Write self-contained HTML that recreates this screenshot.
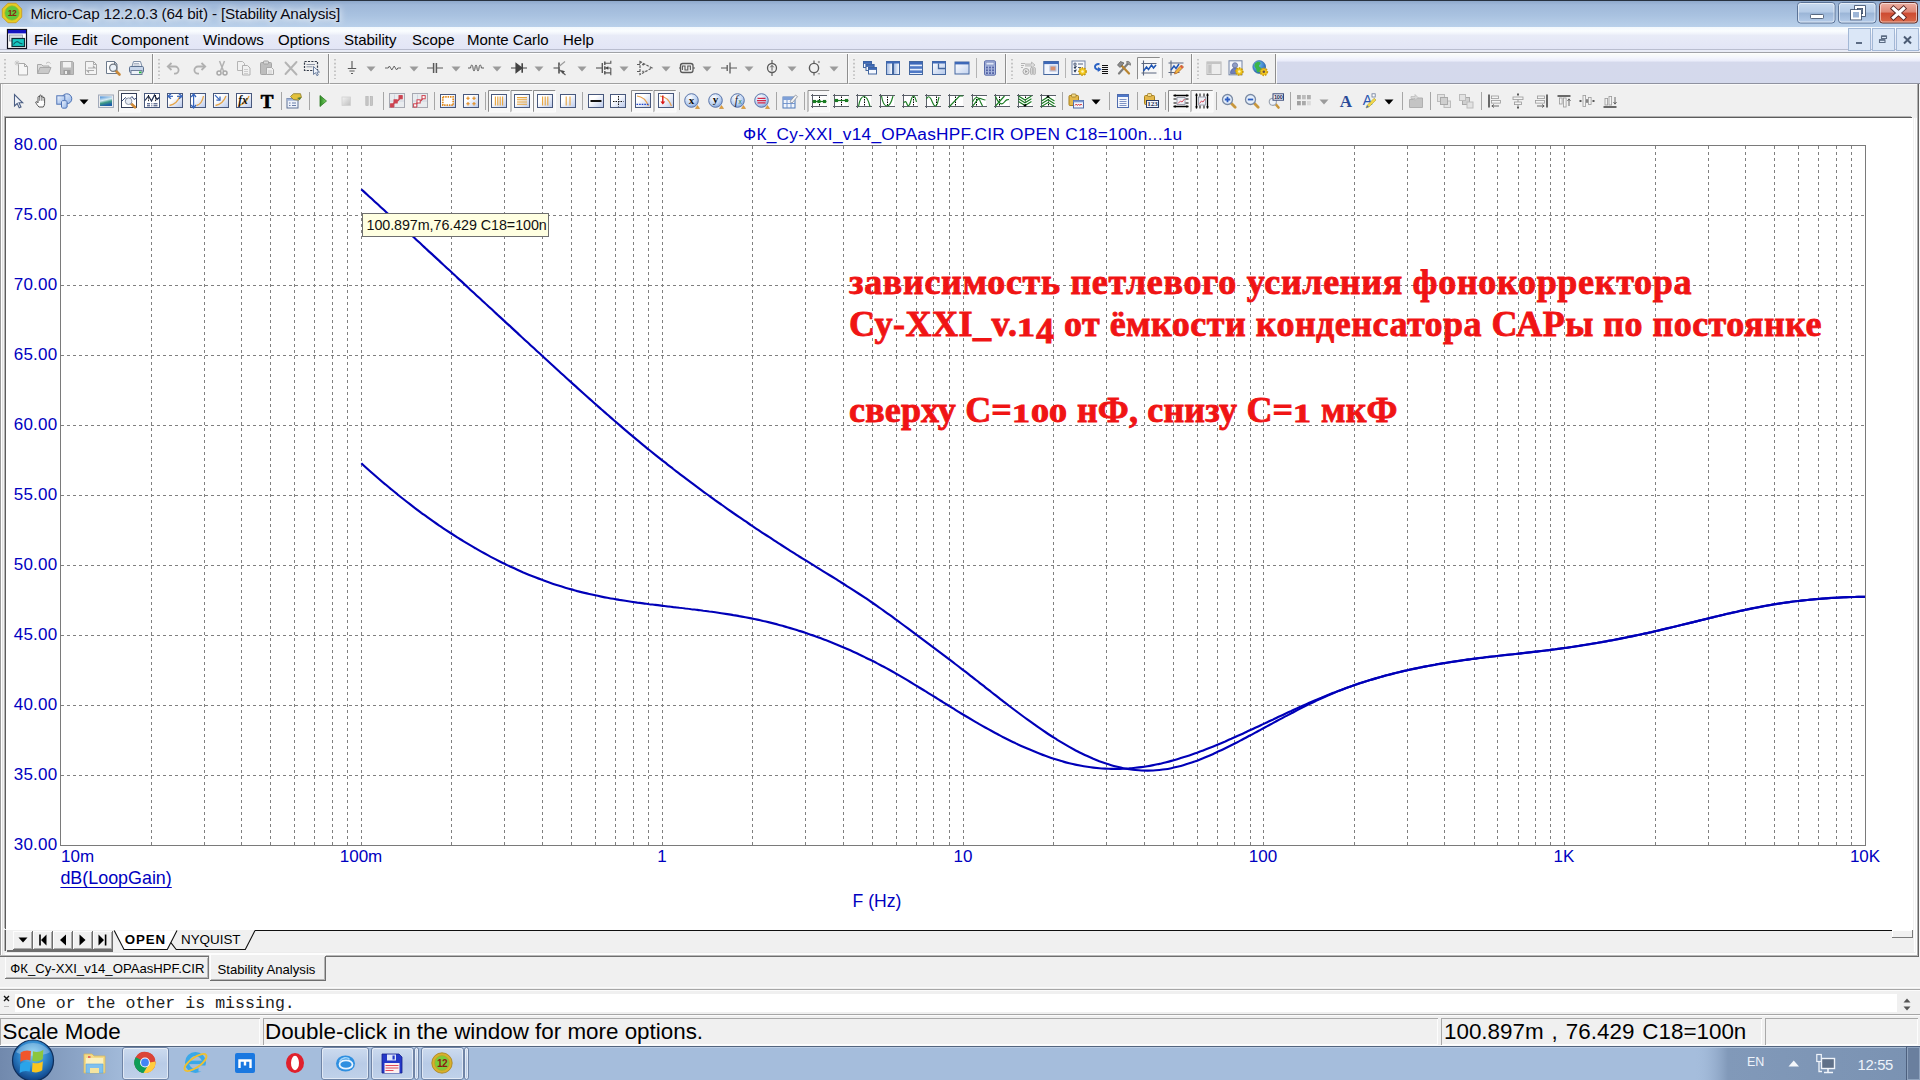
<!DOCTYPE html><html><head><meta charset="utf-8"><title>Micro-Cap</title><style>
*{box-sizing:border-box;margin:0;padding:0}
html,body{width:1920px;height:1080px;overflow:hidden;background:#f0f0f0;font-family:"Liberation Sans",sans-serif;}
div{position:absolute;white-space:nowrap}
#titlebar{left:0;top:0;width:1920px;height:27px;background:linear-gradient(#8ea8cb 0,#9fb8d9 15%,#a9c2e0 55%,#b9d0ea 100%);border-top:1px solid #27313f}
#title{left:30.5px;top:4px;font-size:15.3px;line-height:19px;color:#0a0a14;letter-spacing:-0.17px;text-shadow:0 0 6px #fff,0 0 9px #fff}
#menubar{left:0;top:27px;width:1920px;height:26px;background:linear-gradient(#f3f8fd 0,#fafdff 16%,#f1f4fb 26%,#e8ebf7 34%,#e2e5f6 88%,#e2e4f6 88.5%,#b9bdcf 88.6%,#b9bdcf 92.3%,#e9ecf6 92.4%,#e9ecf6 100%);border-bottom:1px solid #a0a2a6}
.mi{top:30px;font-size:15px;line-height:19px;color:#000}
#tb1{left:0;top:53px;width:1920px;height:31px;background:linear-gradient(#ffffff 0,#f9fbf9 5%,#f3f5fc 16%,#eaecfa 27%,#d5d9ec 30%,#d4d9ec 100%);border-bottom:1px solid #8f92a0}
#tb1a{left:0;top:53px;width:1277px;height:31px;background:#f0f0f0;border-top:1px solid #ffffff;border-bottom:1px solid #a0a0a0}
#tb2{left:0;top:84px;width:1920px;height:34px;background:#f0f0f0;border-top:1px solid #fafafa}
#plotwin{left:6px;top:118px;width:1907px;height:812px;background:#fff;box-shadow:-1px -1px 0 #5c5c5c,-2px -2px 0 #b4b4b4}
#lframe{left:0;top:84px;width:4px;height:872px;background:linear-gradient(90deg,#9a9a9a 0,#9a9a9a 25%,#fff 25%,#fff 50%,#e2e2e2 50%,#e2e2e2 75%,#f2f2f2 75%)}
#lframe2{left:4px;top:930px;width:2px;height:21px;background:linear-gradient(90deg,#b4b4b4 0,#b4b4b4 50%,#5c5c5c 50%)}
#rframe{left:1913px;top:118px;width:4px;height:836px;background:linear-gradient(90deg,#f0f0f0 0,#f0f0f0 25%,#fff 25%,#fff 50%,#f4f4f4 50%,#f4f4f4 75%,#fff 75%)}
#rframe2{left:1917px;top:84px;width:3px;height:873px;background:linear-gradient(90deg,#b0b0b0 0,#b0b0b0 33.3%,#646464 33.3%,#646464 66.6%,#f4f4f4 66.6%)}
.yl{left:0;width:57.5px;text-align:right;font-size:17px;line-height:20px;color:#0000c0;letter-spacing:0.25px}
.xl{top:847px;font-size:17px;line-height:20px;color:#0000c0}
#ctitle{left:743px;top:124px;font-size:17.3px;line-height:20px;color:#0000c8;letter-spacing:0.26px}
#ylab{left:60.4px;top:868px;font-size:17.9px;line-height:20px;color:#0000c0;text-decoration:underline;text-underline-offset:2.5px;text-decoration-skip-ink:none;text-decoration-thickness:1px}
#xlab{left:827px;top:891px;width:100px;text-align:center;font-size:17.6px;line-height:20px;color:#0000c0}
#tip{left:362px;top:213px;width:187px;height:24px;background:#ffffe1;border:1px solid #6f6f6f;font-size:14.3px;line-height:22px;color:#111;padding-left:3.5px;letter-spacing:-0.06px}
.os{position:static;display:inline-block;font-size:26px;line-height:26px;transform:scaleX(1.38);transform-origin:0 100%;width:18.6px;letter-spacing:0;vertical-align:baseline}
.os4{position:relative;top:6.5px}
.red span{white-space:nowrap}
.red{left:849px;font-family:"Liberation Serif",serif;font-weight:bold;font-size:36px;line-height:43px;color:#f01414;-webkit-text-stroke:0.85px #f01414}
#msgtxt{left:16px;top:994px;font-family:"Liberation Mono",monospace;font-size:16.6px;line-height:19px;color:#222}
.st{top:1018.4px;height:27px;font-size:22.4px;line-height:28px;color:#000;overflow:hidden}
.tab{top:931px;font-size:13.4px;line-height:18px;color:#000}
.dtab{font-size:13.15px;line-height:18px;color:#000}
</style></head><body>
<div id="titlebar"></div>
<div id="menubar"></div>
<div id="tb1"></div><div id="tb1a"></div><div id="tb2"></div>
<div id="lframe"></div><div id="rframe"></div><div id="lframe2"></div><div id="rframe2"></div><div id="plotwin"></div>
<svg id="chart" width="1920" height="1080" viewBox="0 0 1920 1080" style="position:absolute;left:0;top:0" shape-rendering="crispEdges">
<path d="M151.5 146 V845M204.5 146 V845M241.5 146 V845M270.5 146 V845M294.5 146 V845M314.5 146 V845M332.5 146 V845M347.5 146 V845M361.5 146 V845M451.5 146 V845M504.5 146 V845M542.5 146 V845M571.5 146 V845M595.5 146 V845M615.5 146 V845M633.5 146 V845M648.5 146 V845M662.5 146 V845M752.5 146 V845M805.5 146 V845M843.5 146 V845M872.5 146 V845M896.5 146 V845M916.5 146 V845M933.5 146 V845M949.5 146 V845M963.5 146 V845M1053.5 146 V845M1106.5 146 V845M1144.5 146 V845M1173.5 146 V845M1197.5 146 V845M1217.5 146 V845M1234.5 146 V845M1250.5 146 V845M1263.5 146 V845M1354.5 146 V845M1407.5 146 V845M1444.5 146 V845M1474.5 146 V845M1497.5 146 V845M1518.5 146 V845M1535.5 146 V845M1550.5 146 V845M1564.5 146 V845M1655.5 146 V845M1708.5 146 V845M1745.5 146 V845M1774.5 146 V845M1798.5 146 V845M1818.5 146 V845M1836.5 146 V845M1851.5 146 V845" stroke="#808080" stroke-width="1" stroke-dasharray="3 3" fill="none"/>
<path d="M61 215.5 H1865M61 285.5 H1865M61 355.5 H1865M61 425.5 H1865M61 495.5 H1865M61 565.5 H1865M61 635.5 H1865M61 705.5 H1865M61 775.5 H1865" stroke="#808080" stroke-width="1" stroke-dasharray="3 3" fill="none"/>
<rect x="60.5" y="145.5" width="1805" height="700" fill="none" stroke="#7a7a7a" stroke-width="1"/>
<g shape-rendering="geometricPrecision" fill="none" stroke="#0000b8" stroke-width="2.15" stroke-linejoin="round">
<path d="M361.3 189.2 C362.3 190.1 365.3 192.9 367.3 194.7 C369.3 196.5 371.3 198.4 373.3 200.2 C375.3 202.0 377.3 203.9 379.3 205.7 C381.3 207.5 383.3 209.4 385.3 211.2 C387.3 213.0 389.3 214.9 391.3 216.7 C393.3 218.6 395.3 220.4 397.3 222.2 C399.3 224.1 401.3 225.9 403.3 227.8 C405.3 229.6 407.3 231.4 409.3 233.3 C411.3 235.1 413.3 237.0 415.3 238.8 C417.3 240.6 419.3 242.5 421.3 244.3 C423.3 246.2 425.3 248.0 427.3 249.9 C429.3 251.7 431.3 253.6 433.3 255.4 C435.3 257.3 437.3 259.1 439.3 260.9 C441.3 262.8 443.3 264.6 445.3 266.5 C447.3 268.3 449.3 270.2 451.3 272.0 C453.3 273.9 455.3 275.7 457.3 277.6 C459.3 279.4 461.3 281.3 463.3 283.1 C465.3 285.0 467.3 286.8 469.3 288.7 C471.3 290.5 473.3 292.4 475.3 294.2 C477.3 296.0 479.3 297.9 481.3 299.7 C483.3 301.6 485.3 303.4 487.3 305.3 C489.3 307.1 491.3 309.0 493.3 310.8 C495.3 312.7 497.3 314.5 499.3 316.4 C501.3 318.2 503.3 320.0 505.3 321.9 C507.3 323.7 509.3 325.6 511.3 327.4 C513.3 329.3 515.3 331.1 517.3 332.9 C519.3 334.8 521.3 336.6 523.3 338.5 C525.3 340.3 527.3 342.2 529.3 344.0 C531.3 345.8 533.3 347.7 535.3 349.5 C537.3 351.3 539.3 353.2 541.3 355.0 C543.3 356.9 545.3 358.7 547.3 360.5 C549.3 362.4 551.3 364.2 553.3 366.0 C555.3 367.9 557.3 369.7 559.3 371.5 C561.3 373.3 563.3 375.2 565.3 377.0 C567.3 378.8 569.3 380.6 571.3 382.4 C573.3 384.2 575.3 386.1 577.3 387.9 C579.3 389.7 581.3 391.5 583.3 393.3 C585.3 395.1 587.3 396.9 589.3 398.6 C591.3 400.4 593.3 402.2 595.3 404.0 C597.3 405.8 599.3 407.5 601.3 409.3 C603.3 411.0 605.3 412.8 607.3 414.5 C609.3 416.3 611.3 418.0 613.3 419.8 C615.3 421.5 617.3 423.2 619.3 424.9 C621.3 426.7 623.3 428.4 625.3 430.1 C627.3 431.8 629.3 433.4 631.3 435.1 C633.3 436.8 635.3 438.5 637.3 440.1 C639.3 441.8 641.3 443.4 643.3 445.1 C645.3 446.7 647.3 448.4 649.3 450.0 C651.3 451.6 653.3 453.2 655.3 454.8 C657.3 456.4 659.3 458.0 661.3 459.6 C663.3 461.2 665.3 462.7 667.3 464.3 C669.3 465.9 671.3 467.4 673.3 469.0 C675.3 470.5 677.3 472.1 679.3 473.6 C681.3 475.1 683.3 476.7 685.3 478.2 C687.3 479.7 689.3 481.2 691.3 482.7 C693.3 484.2 695.3 485.7 697.3 487.1 C699.3 488.6 701.3 490.1 703.3 491.6 C705.3 493.0 707.3 494.5 709.3 495.9 C711.3 497.4 713.3 498.8 715.3 500.3 C717.3 501.7 719.3 503.1 721.3 504.5 C723.3 506.0 725.3 507.4 727.3 508.8 C729.3 510.2 731.3 511.6 733.3 513.0 C735.3 514.3 737.3 515.7 739.3 517.1 C741.3 518.5 743.3 519.8 745.3 521.2 C747.3 522.6 749.3 523.9 751.3 525.3 C753.3 526.6 755.3 528.0 757.3 529.3 C759.3 530.6 761.3 532.0 763.3 533.3 C765.3 534.6 767.3 535.9 769.3 537.2 C771.3 538.5 773.3 539.9 775.3 541.2 C777.3 542.5 779.3 543.7 781.3 545.0 C783.3 546.3 785.3 547.6 787.3 548.9 C789.3 550.2 791.3 551.4 793.3 552.7 C795.3 554.0 797.3 555.2 799.3 556.5 C801.3 557.7 803.3 559.0 805.3 560.2 C807.3 561.5 809.3 562.7 811.3 563.9 C813.3 565.2 815.3 566.4 817.3 567.6 C819.3 568.9 821.3 570.1 823.3 571.3 C825.3 572.6 827.3 573.8 829.3 575.0 C831.3 576.3 833.3 577.5 835.3 578.7 C837.3 580.0 839.3 581.2 841.3 582.5 C843.3 583.7 845.3 585.0 847.3 586.3 C849.3 587.5 851.3 588.8 853.3 590.1 C855.3 591.4 857.3 592.7 859.3 594.0 C861.3 595.3 863.3 596.6 865.3 597.9 C867.3 599.3 869.3 600.6 871.3 602.0 C873.3 603.4 875.3 604.8 877.3 606.1 C879.3 607.5 881.3 609.0 883.3 610.4 C885.3 611.8 887.3 613.3 889.3 614.7 C891.3 616.1 893.3 617.6 895.3 619.1 C897.3 620.5 899.3 622.0 901.3 623.5 C903.3 625.0 905.3 626.5 907.3 627.9 C909.3 629.4 911.3 630.9 913.3 632.4 C915.3 633.9 917.3 635.4 919.3 636.9 C921.3 638.4 923.3 639.9 925.3 641.4 C927.3 642.9 929.3 644.4 931.3 645.9 C933.3 647.4 935.3 648.9 937.3 650.4 C939.3 651.9 941.3 653.4 943.3 654.9 C945.3 656.4 947.3 657.9 949.3 659.4 C951.3 660.9 953.3 662.4 955.3 664.0 C957.3 665.5 959.3 667.0 961.3 668.6 C963.3 670.1 965.3 671.7 967.3 673.2 C969.3 674.8 971.3 676.3 973.3 677.9 C975.3 679.5 977.3 681.0 979.3 682.6 C981.3 684.2 983.3 685.7 985.3 687.3 C987.3 688.9 989.3 690.4 991.3 692.0 C993.3 693.6 995.3 695.1 997.3 696.7 C999.3 698.3 1001.3 699.8 1003.3 701.4 C1005.3 702.9 1007.3 704.4 1009.3 706.0 C1011.3 707.5 1013.3 709.0 1015.3 710.5 C1017.3 712.0 1019.3 713.5 1021.3 715.0 C1023.3 716.5 1025.3 718.0 1027.3 719.4 C1029.3 720.9 1031.3 722.3 1033.3 723.7 C1035.3 725.2 1037.3 726.6 1039.3 727.9 C1041.3 729.3 1043.3 730.7 1045.3 732.0 C1047.3 733.4 1049.3 734.7 1051.3 736.0 C1053.3 737.3 1055.3 738.5 1057.3 739.8 C1059.3 741.0 1061.3 742.2 1063.3 743.4 C1065.3 744.6 1067.3 745.8 1069.3 746.9 C1071.3 748.0 1073.3 749.1 1075.3 750.2 C1077.3 751.2 1079.3 752.3 1081.3 753.2 C1083.3 754.2 1085.3 755.2 1087.3 756.1 C1089.3 757.0 1091.3 757.9 1093.3 758.8 C1095.3 759.6 1097.3 760.4 1099.3 761.2 C1101.3 761.9 1103.3 762.6 1105.3 763.3 C1107.3 764.0 1109.3 764.6 1111.3 765.2 C1113.3 765.8 1115.3 766.3 1117.3 766.8 C1119.3 767.3 1121.3 767.8 1123.3 768.2 C1125.3 768.6 1127.3 768.9 1129.3 769.2 C1131.3 769.5 1133.3 769.8 1135.3 770.0 C1137.3 770.2 1139.3 770.4 1141.3 770.5 C1143.3 770.6 1145.3 770.6 1147.3 770.6 C1149.3 770.6 1151.3 770.6 1153.3 770.5 C1155.3 770.4 1157.3 770.2 1159.3 770.0 C1161.3 769.8 1163.3 769.6 1165.3 769.3 C1167.3 769.0 1169.3 768.6 1171.3 768.2 C1173.3 767.8 1175.3 767.3 1177.3 766.8 C1179.3 766.3 1181.3 765.8 1183.3 765.2 C1185.3 764.6 1187.3 764.0 1189.3 763.3 C1191.3 762.7 1193.3 762.0 1195.3 761.3 C1197.3 760.5 1199.3 759.8 1201.3 759.0 C1203.3 758.2 1205.3 757.4 1207.3 756.5 C1209.3 755.7 1211.3 754.8 1213.3 753.9 C1215.3 753.0 1217.3 752.0 1219.3 751.1 C1221.3 750.2 1223.3 749.2 1225.3 748.2 C1227.3 747.2 1229.3 746.2 1231.3 745.2 C1233.3 744.2 1235.3 743.2 1237.3 742.2 C1239.3 741.1 1241.3 740.1 1243.3 739.0 C1245.3 738.0 1247.3 736.9 1249.3 735.8 C1251.3 734.8 1253.3 733.7 1255.3 732.6 C1257.3 731.5 1259.3 730.5 1261.3 729.4 C1263.3 728.3 1265.3 727.2 1267.3 726.1 C1269.3 725.0 1271.3 724.0 1273.3 722.9 C1275.3 721.8 1277.3 720.7 1279.3 719.6 C1281.3 718.6 1283.3 717.5 1285.3 716.4 C1287.3 715.4 1289.3 714.3 1291.3 713.3 C1293.3 712.2 1295.3 711.2 1297.3 710.1 C1299.3 709.1 1301.3 708.1 1303.3 707.1 C1305.3 706.1 1307.3 705.1 1309.3 704.1 C1311.3 703.1 1313.3 702.1 1315.3 701.2 C1317.3 700.3 1319.3 699.3 1321.3 698.4 C1323.3 697.5 1325.3 696.6 1327.3 695.7 C1329.3 694.9 1331.3 694.0 1333.3 693.2 C1335.3 692.4 1337.3 691.5 1339.3 690.8 C1341.3 690.0 1343.3 689.2 1345.3 688.4 C1347.3 687.7 1349.3 686.9 1351.3 686.2 C1353.3 685.5 1355.3 684.8 1357.3 684.1 C1359.3 683.4 1361.3 682.8 1363.3 682.1 C1365.3 681.5 1367.3 680.8 1369.3 680.2 C1371.3 679.6 1373.3 679.0 1375.3 678.4 C1377.3 677.8 1379.3 677.2 1381.3 676.7 C1383.3 676.1 1385.3 675.6 1387.3 675.0 C1389.3 674.5 1391.3 674.0 1393.3 673.5 C1395.3 673.0 1397.3 672.5 1399.3 672.0 C1401.3 671.6 1403.3 671.1 1405.3 670.6 C1407.3 670.2 1409.3 669.7 1411.3 669.3 C1413.3 668.9 1415.3 668.5 1417.3 668.1 C1419.3 667.7 1421.3 667.3 1423.3 666.9 C1425.3 666.5 1427.3 666.1 1429.3 665.7 C1431.3 665.4 1433.3 665.0 1435.3 664.7 C1437.3 664.3 1439.3 664.0 1441.3 663.6 C1443.3 663.3 1445.3 663.0 1447.3 662.7 C1449.3 662.4 1451.3 662.1 1453.3 661.8 C1455.3 661.5 1457.3 661.2 1459.3 660.9 C1461.3 660.6 1463.3 660.3 1465.3 660.0 C1467.3 659.7 1469.3 659.5 1471.3 659.2 C1473.3 658.9 1475.3 658.7 1477.3 658.4 C1479.3 658.2 1481.3 657.9 1483.3 657.7 C1485.3 657.4 1487.3 657.2 1489.3 656.9 C1491.3 656.7 1493.3 656.5 1495.3 656.2 C1497.3 656.0 1499.3 655.8 1501.3 655.5 C1503.3 655.3 1505.3 655.1 1507.3 654.8 C1509.3 654.6 1511.3 654.4 1513.3 654.2 C1515.3 653.9 1517.3 653.7 1519.3 653.5 C1521.3 653.3 1523.3 653.0 1525.3 652.8 C1527.3 652.6 1529.3 652.4 1531.3 652.1 C1533.3 651.9 1535.3 651.7 1537.3 651.4 C1539.3 651.2 1541.3 651.0 1543.3 650.7 C1545.3 650.5 1547.3 650.3 1549.3 650.0 C1551.3 649.8 1553.3 649.5 1555.3 649.3 C1557.3 649.0 1559.3 648.8 1561.3 648.5 C1563.3 648.2 1565.3 647.9 1567.3 647.7 C1569.3 647.4 1571.3 647.1 1573.3 646.8 C1575.3 646.5 1577.3 646.2 1579.3 645.9 C1581.3 645.6 1583.3 645.3 1585.3 645.0 C1587.3 644.7 1589.3 644.3 1591.3 644.0 C1593.3 643.7 1595.3 643.3 1597.3 643.0 C1599.3 642.6 1601.3 642.3 1603.3 641.9 C1605.3 641.6 1607.3 641.2 1609.3 640.8 C1611.3 640.5 1613.3 640.1 1615.3 639.7 C1617.3 639.3 1619.3 638.9 1621.3 638.5 C1623.3 638.2 1625.3 637.8 1627.3 637.3 C1629.3 636.9 1631.3 636.5 1633.3 636.1 C1635.3 635.7 1637.3 635.3 1639.3 634.8 C1641.3 634.4 1643.3 634.0 1645.3 633.5 C1647.3 633.1 1649.3 632.6 1651.3 632.2 C1653.3 631.7 1655.3 631.3 1657.3 630.8 C1659.3 630.3 1661.3 629.9 1663.3 629.4 C1665.3 628.9 1667.3 628.4 1669.3 628.0 C1671.3 627.5 1673.3 627.0 1675.3 626.5 C1677.3 626.0 1679.3 625.5 1681.3 625.0 C1683.3 624.5 1685.3 624.0 1687.3 623.5 C1689.3 623.1 1691.3 622.6 1693.3 622.1 C1695.3 621.6 1697.3 621.1 1699.3 620.6 C1701.3 620.1 1703.3 619.6 1705.3 619.1 C1707.3 618.6 1709.3 618.1 1711.3 617.6 C1713.3 617.1 1715.3 616.7 1717.3 616.2 C1719.3 615.7 1721.3 615.2 1723.3 614.7 C1725.3 614.3 1727.3 613.8 1729.3 613.3 C1731.3 612.9 1733.3 612.4 1735.3 612.0 C1737.3 611.5 1739.3 611.1 1741.3 610.6 C1743.3 610.2 1745.3 609.8 1747.3 609.4 C1749.3 608.9 1751.3 608.5 1753.3 608.1 C1755.3 607.7 1757.3 607.3 1759.3 607.0 C1761.3 606.6 1763.3 606.2 1765.3 605.8 C1767.3 605.5 1769.3 605.1 1771.3 604.8 C1773.3 604.4 1775.3 604.1 1777.3 603.8 C1779.3 603.5 1781.3 603.2 1783.3 602.9 C1785.3 602.6 1787.3 602.3 1789.3 602.1 C1791.3 601.8 1793.3 601.5 1795.3 601.3 C1797.3 601.0 1799.3 600.8 1801.3 600.6 C1803.3 600.4 1805.3 600.2 1807.3 600.0 C1809.3 599.8 1811.3 599.6 1813.3 599.4 C1815.3 599.2 1817.3 599.0 1819.3 598.9 C1821.3 598.7 1823.3 598.6 1825.3 598.4 C1827.3 598.3 1829.3 598.2 1831.3 598.0 C1833.3 597.9 1835.3 597.8 1837.3 597.7 C1839.3 597.6 1841.3 597.5 1843.3 597.4 C1845.3 597.3 1847.3 597.2 1849.3 597.2 C1851.3 597.1 1853.3 597.0 1855.3 597.0 C1857.3 596.9 1859.7 596.9 1861.3 596.8 C1862.9 596.8 1864.4 596.8 1865.0 596.8"/>
<path d="M361.3 463.3 C362.3 464.2 365.3 466.9 367.3 468.7 C369.3 470.5 371.3 472.3 373.3 474.0 C375.3 475.8 377.3 477.5 379.3 479.2 C381.3 481.0 383.3 482.7 385.3 484.3 C387.3 486.0 389.3 487.7 391.3 489.3 C393.3 491.0 395.3 492.6 397.3 494.2 C399.3 495.9 401.3 497.5 403.3 499.0 C405.3 500.6 407.3 502.2 409.3 503.7 C411.3 505.3 413.3 506.8 415.3 508.3 C417.3 509.8 419.3 511.3 421.3 512.8 C423.3 514.2 425.3 515.7 427.3 517.1 C429.3 518.6 431.3 520.0 433.3 521.4 C435.3 522.8 437.3 524.2 439.3 525.6 C441.3 526.9 443.3 528.3 445.3 529.6 C447.3 530.9 449.3 532.2 451.3 533.5 C453.3 534.8 455.3 536.1 457.3 537.4 C459.3 538.6 461.3 539.9 463.3 541.1 C465.3 542.3 467.3 543.5 469.3 544.7 C471.3 545.9 473.3 547.1 475.3 548.2 C477.3 549.4 479.3 550.5 481.3 551.6 C483.3 552.7 485.3 553.8 487.3 554.9 C489.3 556.0 491.3 557.1 493.3 558.1 C495.3 559.2 497.3 560.2 499.3 561.2 C501.3 562.2 503.3 563.2 505.3 564.1 C507.3 565.1 509.3 566.1 511.3 567.0 C513.3 567.9 515.3 568.8 517.3 569.7 C519.3 570.6 521.3 571.5 523.3 572.4 C525.3 573.2 527.3 574.1 529.3 574.9 C531.3 575.7 533.3 576.5 535.3 577.3 C537.3 578.1 539.3 578.9 541.3 579.6 C543.3 580.4 545.3 581.1 547.3 581.8 C549.3 582.5 551.3 583.2 553.3 583.9 C555.3 584.6 557.3 585.2 559.3 585.8 C561.3 586.5 563.3 587.1 565.3 587.7 C567.3 588.3 569.3 588.9 571.3 589.4 C573.3 590.0 575.3 590.5 577.3 591.1 C579.3 591.6 581.3 592.1 583.3 592.6 C585.3 593.1 587.3 593.6 589.3 594.0 C591.3 594.5 593.3 594.9 595.3 595.3 C597.3 595.8 599.3 596.2 601.3 596.6 C603.3 597.0 605.3 597.4 607.3 597.7 C609.3 598.1 611.3 598.5 613.3 598.8 C615.3 599.2 617.3 599.5 619.3 599.9 C621.3 600.2 623.3 600.5 625.3 600.8 C627.3 601.1 629.3 601.4 631.3 601.7 C633.3 602.0 635.3 602.3 637.3 602.6 C639.3 602.8 641.3 603.1 643.3 603.4 C645.3 603.7 647.3 603.9 649.3 604.2 C651.3 604.4 653.3 604.7 655.3 604.9 C657.3 605.2 659.3 605.4 661.3 605.6 C663.3 605.9 665.3 606.1 667.3 606.4 C669.3 606.6 671.3 606.8 673.3 607.1 C675.3 607.3 677.3 607.5 679.3 607.8 C681.3 608.0 683.3 608.2 685.3 608.5 C687.3 608.7 689.3 608.9 691.3 609.2 C693.3 609.4 695.3 609.7 697.3 609.9 C699.3 610.2 701.3 610.4 703.3 610.7 C705.3 610.9 707.3 611.2 709.3 611.5 C711.3 611.7 713.3 612.0 715.3 612.3 C717.3 612.6 719.3 612.9 721.3 613.2 C723.3 613.5 725.3 613.8 727.3 614.1 C729.3 614.4 731.3 614.7 733.3 615.1 C735.3 615.4 737.3 615.7 739.3 616.1 C741.3 616.4 743.3 616.8 745.3 617.2 C747.3 617.6 749.3 618.0 751.3 618.4 C753.3 618.8 755.3 619.2 757.3 619.6 C759.3 620.1 761.3 620.5 763.3 621.0 C765.3 621.4 767.3 621.9 769.3 622.4 C771.3 622.9 773.3 623.4 775.3 623.9 C777.3 624.4 779.3 625.0 781.3 625.5 C783.3 626.1 785.3 626.6 787.3 627.2 C789.3 627.8 791.3 628.4 793.3 629.0 C795.3 629.6 797.3 630.2 799.3 630.9 C801.3 631.5 803.3 632.1 805.3 632.8 C807.3 633.5 809.3 634.2 811.3 634.9 C813.3 635.5 815.3 636.3 817.3 637.0 C819.3 637.7 821.3 638.5 823.3 639.2 C825.3 640.0 827.3 640.7 829.3 641.5 C831.3 642.3 833.3 643.1 835.3 643.9 C837.3 644.7 839.3 645.6 841.3 646.4 C843.3 647.3 845.3 648.1 847.3 649.0 C849.3 649.9 851.3 650.8 853.3 651.7 C855.3 652.6 857.3 653.5 859.3 654.5 C861.3 655.4 863.3 656.4 865.3 657.4 C867.3 658.3 869.3 659.3 871.3 660.3 C873.3 661.3 875.3 662.3 877.3 663.4 C879.3 664.4 881.3 665.5 883.3 666.5 C885.3 667.6 887.3 668.7 889.3 669.8 C891.3 670.9 893.3 672.0 895.3 673.2 C897.3 674.3 899.3 675.5 901.3 676.6 C903.3 677.8 905.3 679.0 907.3 680.2 C909.3 681.4 911.3 682.6 913.3 683.8 C915.3 685.0 917.3 686.2 919.3 687.5 C921.3 688.7 923.3 689.9 925.3 691.2 C927.3 692.4 929.3 693.7 931.3 694.9 C933.3 696.1 935.3 697.4 937.3 698.6 C939.3 699.9 941.3 701.1 943.3 702.4 C945.3 703.6 947.3 704.9 949.3 706.1 C951.3 707.3 953.3 708.6 955.3 709.8 C957.3 711.0 959.3 712.2 961.3 713.5 C963.3 714.7 965.3 715.9 967.3 717.0 C969.3 718.2 971.3 719.4 973.3 720.6 C975.3 721.8 977.3 722.9 979.3 724.1 C981.3 725.2 983.3 726.3 985.3 727.5 C987.3 728.6 989.3 729.7 991.3 730.8 C993.3 731.9 995.3 733.0 997.3 734.0 C999.3 735.1 1001.3 736.1 1003.3 737.2 C1005.3 738.2 1007.3 739.2 1009.3 740.2 C1011.3 741.2 1013.3 742.2 1015.3 743.1 C1017.3 744.1 1019.3 745.0 1021.3 745.9 C1023.3 746.8 1025.3 747.7 1027.3 748.6 C1029.3 749.5 1031.3 750.3 1033.3 751.1 C1035.3 752.0 1037.3 752.8 1039.3 753.5 C1041.3 754.3 1043.3 755.1 1045.3 755.8 C1047.3 756.5 1049.3 757.2 1051.3 757.9 C1053.3 758.6 1055.3 759.2 1057.3 759.8 C1059.3 760.5 1061.3 761.0 1063.3 761.6 C1065.3 762.2 1067.3 762.7 1069.3 763.2 C1071.3 763.7 1073.3 764.2 1075.3 764.6 C1077.3 765.0 1079.3 765.4 1081.3 765.8 C1083.3 766.2 1085.3 766.5 1087.3 766.8 C1089.3 767.1 1091.3 767.4 1093.3 767.6 C1095.3 767.8 1097.3 768.0 1099.3 768.2 C1101.3 768.4 1103.3 768.5 1105.3 768.6 C1107.3 768.7 1109.3 768.8 1111.3 768.9 C1113.3 768.9 1115.3 768.9 1117.3 768.9 C1119.3 768.9 1121.3 768.8 1123.3 768.7 C1125.3 768.6 1127.3 768.5 1129.3 768.4 C1131.3 768.2 1133.3 768.1 1135.3 767.8 C1137.3 767.6 1139.3 767.4 1141.3 767.1 C1143.3 766.9 1145.3 766.6 1147.3 766.2 C1149.3 765.9 1151.3 765.5 1153.3 765.1 C1155.3 764.8 1157.3 764.3 1159.3 763.9 C1161.3 763.4 1163.3 763.0 1165.3 762.5 C1167.3 762.0 1169.3 761.5 1171.3 760.9 C1173.3 760.4 1175.3 759.8 1177.3 759.2 C1179.3 758.6 1181.3 758.0 1183.3 757.3 C1185.3 756.7 1187.3 756.1 1189.3 755.4 C1191.3 754.7 1193.3 754.0 1195.3 753.3 C1197.3 752.6 1199.3 751.8 1201.3 751.1 C1203.3 750.3 1205.3 749.6 1207.3 748.8 C1209.3 748.0 1211.3 747.2 1213.3 746.4 C1215.3 745.6 1217.3 744.8 1219.3 743.9 C1221.3 743.1 1223.3 742.2 1225.3 741.4 C1227.3 740.5 1229.3 739.6 1231.3 738.8 C1233.3 737.9 1235.3 737.0 1237.3 736.1 C1239.3 735.2 1241.3 734.3 1243.3 733.4 C1245.3 732.5 1247.3 731.5 1249.3 730.6 C1251.3 729.7 1253.3 728.8 1255.3 727.8 C1257.3 726.9 1259.3 726.0 1261.3 725.0 C1263.3 724.1 1265.3 723.1 1267.3 722.2 C1269.3 721.3 1271.3 720.3 1273.3 719.4 C1275.3 718.4 1277.3 717.5 1279.3 716.5 C1281.3 715.6 1283.3 714.7 1285.3 713.7 C1287.3 712.8 1289.3 711.9 1291.3 711.0 C1293.3 710.0 1295.3 709.1 1297.3 708.2 C1299.3 707.3 1301.3 706.4 1303.3 705.5 C1305.3 704.6 1307.3 703.7 1309.3 702.8 C1311.3 701.9 1313.3 701.1 1315.3 700.2 C1317.3 699.3 1319.3 698.5 1321.3 697.7 C1323.3 696.8 1325.3 696.0 1327.3 695.2 C1329.3 694.4 1331.3 693.6 1333.3 692.8 C1335.3 692.0 1337.3 691.3 1339.3 690.5 C1341.3 689.8 1343.3 689.0 1345.3 688.3 C1347.3 687.6 1349.3 686.9 1351.3 686.2 C1353.3 685.5 1355.3 684.8 1357.3 684.2 C1359.3 683.5 1361.3 682.8 1363.3 682.2 C1365.3 681.6 1367.3 681.0 1369.3 680.3 C1371.3 679.7 1373.3 679.1 1375.3 678.6 C1377.3 678.0 1379.3 677.4 1381.3 676.8 C1383.3 676.3 1385.3 675.7 1387.3 675.2 C1389.3 674.7 1391.3 674.2 1393.3 673.6 C1395.3 673.1 1397.3 672.6 1399.3 672.2 C1401.3 671.7 1403.3 671.2 1405.3 670.7 C1407.3 670.3 1409.3 669.8 1411.3 669.4 C1413.3 668.9 1415.3 668.5 1417.3 668.1 C1419.3 667.7 1421.3 667.3 1423.3 666.9 C1425.3 666.5 1427.3 666.1 1429.3 665.7 C1431.3 665.3 1433.3 664.9 1435.3 664.6 C1437.3 664.2 1439.3 663.9 1441.3 663.5 C1443.3 663.2 1445.3 662.8 1447.3 662.5 C1449.3 662.2 1451.3 661.9 1453.3 661.6 C1455.3 661.3 1457.3 661.0 1459.3 660.7 C1461.3 660.4 1463.3 660.1 1465.3 659.8 C1467.3 659.5 1469.3 659.3 1471.3 659.0 C1473.3 658.7 1475.3 658.5 1477.3 658.2 C1479.3 658.0 1481.3 657.8 1483.3 657.5 C1485.3 657.3 1487.3 657.1 1489.3 656.8 C1491.3 656.6 1493.3 656.4 1495.3 656.2 C1497.3 655.9 1499.3 655.7 1501.3 655.5 C1503.3 655.3 1505.3 655.1 1507.3 654.9 C1509.3 654.7 1511.3 654.5 1513.3 654.2 C1515.3 654.0 1517.3 653.8 1519.3 653.6 C1521.3 653.4 1523.3 653.2 1525.3 652.9 C1527.3 652.7 1529.3 652.5 1531.3 652.3 C1533.3 652.0 1535.3 651.8 1537.3 651.6 C1539.3 651.3 1541.3 651.1 1543.3 650.8 C1545.3 650.6 1547.3 650.3 1549.3 650.1 C1551.3 649.8 1553.3 649.5 1555.3 649.3 C1557.3 649.0 1559.3 648.7 1561.3 648.4 C1563.3 648.2 1565.3 647.9 1567.3 647.6 C1569.3 647.3 1571.3 647.0 1573.3 646.7 C1575.3 646.4 1577.3 646.1 1579.3 645.8 C1581.3 645.4 1583.3 645.1 1585.3 644.8 C1587.3 644.5 1589.3 644.1 1591.3 643.8 C1593.3 643.5 1595.3 643.1 1597.3 642.8 C1599.3 642.4 1601.3 642.1 1603.3 641.7 C1605.3 641.4 1607.3 641.0 1609.3 640.6 C1611.3 640.3 1613.3 639.9 1615.3 639.5 C1617.3 639.1 1619.3 638.8 1621.3 638.4 C1623.3 638.0 1625.3 637.6 1627.3 637.2 C1629.3 636.8 1631.3 636.4 1633.3 635.9 C1635.3 635.5 1637.3 635.1 1639.3 634.7 C1641.3 634.3 1643.3 633.8 1645.3 633.4 C1647.3 633.0 1649.3 632.5 1651.3 632.1 C1653.3 631.6 1655.3 631.2 1657.3 630.7 C1659.3 630.3 1661.3 629.8 1663.3 629.3 C1665.3 628.9 1667.3 628.4 1669.3 627.9 C1671.3 627.5 1673.3 627.0 1675.3 626.5 C1677.3 626.0 1679.3 625.5 1681.3 625.0 C1683.3 624.6 1685.3 624.1 1687.3 623.6 C1689.3 623.1 1691.3 622.6 1693.3 622.1 C1695.3 621.6 1697.3 621.1 1699.3 620.6 C1701.3 620.2 1703.3 619.7 1705.3 619.2 C1707.3 618.7 1709.3 618.2 1711.3 617.7 C1713.3 617.2 1715.3 616.8 1717.3 616.3 C1719.3 615.8 1721.3 615.3 1723.3 614.9 C1725.3 614.4 1727.3 613.9 1729.3 613.5 C1731.3 613.0 1733.3 612.6 1735.3 612.1 C1737.3 611.7 1739.3 611.2 1741.3 610.8 C1743.3 610.4 1745.3 609.9 1747.3 609.5 C1749.3 609.1 1751.3 608.7 1753.3 608.3 C1755.3 607.9 1757.3 607.5 1759.3 607.1 C1761.3 606.7 1763.3 606.3 1765.3 606.0 C1767.3 605.6 1769.3 605.2 1771.3 604.9 C1773.3 604.6 1775.3 604.2 1777.3 603.9 C1779.3 603.6 1781.3 603.3 1783.3 603.0 C1785.3 602.7 1787.3 602.4 1789.3 602.1 C1791.3 601.9 1793.3 601.6 1795.3 601.3 C1797.3 601.1 1799.3 600.8 1801.3 600.6 C1803.3 600.4 1805.3 600.2 1807.3 600.0 C1809.3 599.7 1811.3 599.5 1813.3 599.4 C1815.3 599.2 1817.3 599.0 1819.3 598.8 C1821.3 598.7 1823.3 598.5 1825.3 598.4 C1827.3 598.2 1829.3 598.1 1831.3 597.9 C1833.3 597.8 1835.3 597.7 1837.3 597.6 C1839.3 597.5 1841.3 597.4 1843.3 597.3 C1845.3 597.2 1847.3 597.1 1849.3 597.0 C1851.3 597.0 1853.3 596.9 1855.3 596.9 C1857.3 596.8 1859.7 596.8 1861.3 596.7 C1862.9 596.7 1864.4 596.7 1865.0 596.7"/>
</g>
</svg>
<svg width="1920" height="150" viewBox="0 930 1920 150" style="position:absolute;left:0;top:930px" shape-rendering="crispEdges">
<rect x="7" y="931" width="1907" height="22" fill="#f0f0f0"/>
<path d="M255 930.500H1892" stroke="#101010"/>
<rect x="13" y="931" width="20" height="19" fill="#f0f0f0"/><path d="M13.5 950V931.500H33" fill="none" stroke="#fdfdfd"/><path d="M32.5 931V950.500M13 949.500H33" fill="none" stroke="#6e6e6e"/><path d="M31.5 932V949M14 948.500H32" fill="none" stroke="#a9a9a9"/>
<rect x="33" y="931" width="20" height="19" fill="#f0f0f0"/><path d="M33.5 950V931.500H53" fill="none" stroke="#fdfdfd"/><path d="M52.5 931V950.500M33 949.500H53" fill="none" stroke="#6e6e6e"/><path d="M51.5 932V949M34 948.500H52" fill="none" stroke="#a9a9a9"/>
<rect x="53" y="931" width="20" height="19" fill="#f0f0f0"/><path d="M53.5 950V931.500H73" fill="none" stroke="#fdfdfd"/><path d="M72.5 931V950.500M53 949.500H73" fill="none" stroke="#6e6e6e"/><path d="M71.5 932V949M54 948.500H72" fill="none" stroke="#a9a9a9"/>
<rect x="73" y="931" width="20" height="19" fill="#f0f0f0"/><path d="M73.5 950V931.500H93" fill="none" stroke="#fdfdfd"/><path d="M92.5 931V950.500M73 949.500H93" fill="none" stroke="#6e6e6e"/><path d="M91.5 932V949M74 948.500H92" fill="none" stroke="#a9a9a9"/>
<rect x="93" y="931" width="20" height="19" fill="#f0f0f0"/><path d="M93.5 950V931.500H113" fill="none" stroke="#fdfdfd"/><path d="M112.5 931V950.500M93 949.500H113" fill="none" stroke="#6e6e6e"/><path d="M111.5 932V949M94 948.500H112" fill="none" stroke="#a9a9a9"/>
<path d="M7 950.500H113" stroke="#6e6e6e"/><path d="M7 951.500H113" stroke="#6e6e6e"/>
<g shape-rendering="geometricPrecision" fill="#000">
<path d="M18.500 937.500h9l-4.500 5z"/>
<path d="M39.200 934.500h1.600v11h-1.600zM46.500 934.500v11l-5.500-5.500z"/>
<path d="M66 934.500v11l-6-5.500z"/>
<path d="M79.500 934.500v11l6-5.500z"/>
<path d="M98.500 934.500v11l5.500-5.500zM104.800 934.500h1.600v11h-1.600z"/>
<path d="M114.200 930.500l9.800 19h43.300l9.700-19z" fill="#fff" stroke="none"/>
<path d="M114.200 930.500l9.800 19h43.300l9.700-19" fill="none" stroke="#101010" stroke-width="1.100"/>
<path d="M170.900 942.700l5.300 6.800h69.100l9.700-19" fill="none" stroke="#101010" stroke-width="1.100"/>
</g>
<rect x="1892" y="930" width="21" height="8" fill="#f0f0f0"/><path d="M1892 937.500H1913M1912.500 930V938" stroke="#7a7a7a"/><path d="M1892.500 931V937M1892 930.500H1912" stroke="#fdfdfd"/>
<path d="M5 953.500H1917M5 954.500H1917" stroke="#fdfdfd"/><path d="M5 952.500H1915" stroke="#ececec"/>
<path d="M0 956.500H209M325 956.500H1918" stroke="#6e6e6e"/><path d="M0 955.500H209M326 955.500H1918" stroke="#b9b9b9"/>
<path d="M5.500 978V957" stroke="#fdfdfd"/><path d="M5 978.500H209M208.500 957V979" stroke="#7a7a7a"/><path d="M6 977.500H208M207.500 958V978" stroke="#b9b9b9"/>
<path d="M210.500 955V980" stroke="#fdfdfd"/><path d="M210 980.500H326M325.500 956V981" stroke="#6e6e6e"/><path d="M211 979.500H325M324.500 957V980" stroke="#b4b4b4"/>
<path d="M0 987.500H1920" stroke="#fbfbfb"/><path d="M0 989.500H1920" stroke="#a6a6a6"/><path d="M0 990.500H1920" stroke="#fbfbfb"/>
<rect x="15" y="994" width="1882" height="18" fill="#fff"/>
<g shape-rendering="geometricPrecision"><path d="M4 996l5 5M9 996l-5 5" stroke="#111" stroke-width="1.400"/><path d="M4 1006.500h5" stroke="#b8b8b8" stroke-width="1"/>
<path d="M1903.500 1002.500h7l-3.500-4z" fill="#555"/><path d="M1903.500 1006.500h7l-3.500 4z" fill="#555"/></g>
<path d="M0 1014.500H1920" stroke="#a6a6a6"/><path d="M0 1015.500H1920" stroke="#fbfbfb"/>
<path d="M0.5 1045V1018.500H260" fill="none" stroke="#a9a9a9"/><path d="M1 1044.500H259.5V1019" fill="none" stroke="#fdfdfd"/>
<path d="M263.5 1045V1018.500H1438" fill="none" stroke="#a9a9a9"/><path d="M264 1044.500H1437.5V1019" fill="none" stroke="#fdfdfd"/>
<path d="M1441.5 1045V1018.500H1762" fill="none" stroke="#a9a9a9"/><path d="M1442 1044.500H1761.5V1019" fill="none" stroke="#fdfdfd"/>
<path d="M1765.5 1045V1018.500H1918" fill="none" stroke="#a9a9a9"/><path d="M1766 1044.500H1917.5V1019" fill="none" stroke="#fdfdfd"/>
</svg>
<svg width="1920" height="45" viewBox="0 1035 1920 45" style="position:absolute;left:0;top:1035px">
<defs>
<linearGradient id="tkl" x1="0" y1="0" x2="1" y2="0"><stop offset="0" stop-color="#7189ad"/><stop offset="0.55" stop-color="#8da6c8"/><stop offset="1" stop-color="#a5bddc" stop-opacity="0"/></linearGradient>
<linearGradient id="tkr" x1="0" y1="0" x2="1" y2="0"><stop offset="0" stop-color="#a5bddc" stop-opacity="0"/><stop offset="0.15" stop-color="#8199b9"/><stop offset="1" stop-color="#7a92b2"/></linearGradient>
<radialGradient id="orb" cx="0.5" cy="0.35" r="0.75"><stop offset="0" stop-color="#7fd0f2"/><stop offset="0.45" stop-color="#2f86cc"/><stop offset="0.8" stop-color="#134a8e"/><stop offset="1" stop-color="#0c2f62"/></radialGradient>
<linearGradient id="tbtn" x1="0" y1="0" x2="0" y2="1"><stop offset="0" stop-color="#dbe6f5"/><stop offset="0.5" stop-color="#bfd0ea"/><stop offset="1" stop-color="#c9d8ee"/></linearGradient>
</defs>
<rect x="0" y="1046" width="1920" height="34" fill="#a5bddc"/>
<rect x="0" y="1046" width="150" height="34" fill="url(#tkl)"/>
<rect x="1694" y="1046" width="226" height="34" fill="url(#tkr)"/>
<path d="M0 1045.500H1920" stroke="#fbfbfb"/><path d="M0 1046.500H1920" stroke="#53657f"/><path d="M0 1047.500H1920" stroke="#c4d4e8" stroke-opacity="0.7"/>
<circle cx="33" cy="1060.500" r="20.500" fill="url(#orb)" stroke="#0d2d5a" stroke-width="1.200"/>
<path d="M16 1052c8-12 26-12 34 0c-8 5-26 5-34 0z" fill="#fff" fill-opacity="0.280"/>
<g transform="translate(33 1061) rotate(-6)"><path d="M-11.500 -9.500c3.500-2.200 7-2.200 10.500-0.600l-1.600 9.200c-3.400-1.500-6.600-1.300-10 0.500z" fill="#f0562a"/><path d="M1 -9.600c3.600 1.600 7 1.500 10.500-0.500l-1.600 9.200c-3.300 2-7 2.200-10.500 0.600z" fill="#8cc63e"/><path d="M-13 1.600c3.400-1.800 6.800-2 10.300-0.400l-1.600 9c-3.500-1.600-7-1.500-10.300 0.400z" fill="#2aa4ea"/><path d="M-0.600 1.600c3.500 1.600 7 1.500 10.400-0.400l-1.600 9c-3.400 1.900-7 2-10.400 0.400z" fill="#fbc51e"/></g>
<g transform="translate(83 1050)"><path d="M1 4h8l2 2h11v17h-21z" fill="#f4dc8a" stroke="#d9b85a" stroke-width="0.800"/><rect x="3" y="8" width="17" height="10" fill="#faf0c0"/><path d="M3 14h17v9h-17z" fill="#7fc0ee" stroke="#5aa4dc" stroke-width="0.600"/><path d="M7 18h9v5h-9z" fill="#f4e4a0"/><rect x="5" y="6" width="2.500" height="2" fill="#e86a5a"/></g>
<rect x="122.5" y="1047.500" width="46" height="32" rx="2.500" fill="url(#tbtn)" fill-opacity="0.750" stroke="#6f84a6"/><rect x="123.5" y="1048.500" width="44" height="30" rx="2" fill="none" stroke="#fff" stroke-opacity="0.550"/>
<rect x="321.5" y="1047.500" width="47" height="32" rx="2.500" fill="url(#tbtn)" fill-opacity="0.750" stroke="#6f84a6"/><rect x="322.5" y="1048.500" width="45" height="30" rx="2" fill="none" stroke="#fff" stroke-opacity="0.550"/>
<rect x="371.5" y="1047.500" width="42" height="32" rx="2.500" fill="url(#tbtn)" fill-opacity="0.750" stroke="#6f84a6"/><rect x="372.5" y="1048.500" width="40" height="30" rx="2" fill="none" stroke="#fff" stroke-opacity="0.550"/>
<rect x="414.5" y="1047.500" width="4" height="32" rx="2.500" fill="url(#tbtn)" fill-opacity="0.750" stroke="#6f84a6"/><rect x="415.5" y="1048.500" width="2" height="30" rx="2" fill="none" stroke="#fff" stroke-opacity="0.550"/>
<rect x="421.5" y="1047.500" width="42" height="32" rx="2.500" fill="url(#tbtn)" fill-opacity="0.750" stroke="#6f84a6"/><rect x="422.5" y="1048.500" width="40" height="30" rx="2" fill="none" stroke="#fff" stroke-opacity="0.550"/>
<rect x="464.5" y="1047.500" width="4" height="32" rx="2.500" fill="url(#tbtn)" fill-opacity="0.750" stroke="#6f84a6"/><rect x="465.5" y="1048.500" width="2" height="30" rx="2" fill="none" stroke="#fff" stroke-opacity="0.550"/>
<g transform="translate(145 1062.500)"><circle r="10.600" fill="#db4437"/><path d="M0 0L-9.180 -5.300A10.600 10.600 0 0 0 0 10.600z" fill="#0f9d58" transform="rotate(0)"/><path d="M-9.180 -5.300A10.600 10.600 0 0 0 -1 10.560L4.500 2.600L0 0z" fill="#0f9d58"/><path d="M10.560 -1A10.600 10.600 0 0 1 -1.500 10.500L4.600 0z" fill="#ffcd40"/><path d="M-9.180 -5.300A10.600 10.600 0 0 1 10.300 -2.500H0z" fill="#db4437"/><circle r="4.900" fill="#fff"/><circle r="3.900" fill="#4285f4"/></g>
<g transform="translate(195.500 1062.500)"><circle r="8.500" fill="none" stroke="#3aa8e8" stroke-width="4"/><rect x="-7" y="-1.800" width="14" height="3.400" fill="#3aa8e8"/><path d="M3 3h8v6h-8z" fill="#a5bddc"/><ellipse rx="13" ry="5" fill="none" stroke="#f0c030" stroke-width="1.800" transform="rotate(-35)"/></g>
<rect x="235" y="1053" width="20" height="20" rx="2" fill="#1a78e0"/><path d="M239.500 1068v-7.500h11v7.500M245 1060.500v5" fill="none" stroke="#fff" stroke-width="2.400"/>
<ellipse cx="295" cy="1063" rx="9" ry="10" fill="#e0202c"/><ellipse cx="295" cy="1063" rx="4" ry="7.200" fill="#fff"/>
<g transform="translate(345.500 1063.500)"><ellipse rx="9.500" ry="8" fill="#2f8fe0"/><ellipse cx="0.500" cy="1" rx="6.500" ry="4.200" fill="none" stroke="#e8f4ff" stroke-width="1.800"/><path d="M-6 -2c2-4 8-5 10-2" fill="none" stroke="#9fd4fa" stroke-width="1.600"/></g>
<g transform="translate(382 1054)"><path d="M0 0h17l3 3v16h-20z" fill="#2438c8" stroke="#14208c" stroke-width="0.800"/><rect x="5" y="0.500" width="9" height="6" fill="#dfe6fa"/><rect x="10.500" y="1.500" width="2.200" height="4" fill="#2438c8"/><rect x="2.500" y="9" width="15" height="10" fill="#fbeff0"/><path d="M3.500 11.500h13M3.500 14h13M3.500 16.500h8" stroke="#e04858" stroke-width="1.100"/></g>
<g transform="translate(442 1063)"><circle r="10.200" fill="#d8b02c" stroke="#a8801c" stroke-width="0.800"/><circle r="7.400" fill="#7ccc3a" stroke="#b8a428" stroke-width="0.800"/><text x="0" y="3.800" text-anchor="middle" font-family="Liberation Sans" font-weight="bold" font-size="10" fill="#8c1a10" letter-spacing="-0.500">12</text></g>
<text x="1747" y="1065.500" font-family="Liberation Sans" font-size="12.500" fill="#eef3fa">EN</text>
<path d="M1788.500 1066.500h10.500l-5.250-6z" fill="#f4f7fb"/>
<g transform="translate(1816 1053)"><rect x="5.500" y="5.500" width="13" height="10" fill="#5f7088" stroke="#f0f4fa" stroke-width="1.400"/><path d="M8 19.500h9M12 16v3.500" stroke="#f0f4fa" stroke-width="1.600"/><rect x="0.800" y="1.500" width="4.500" height="7" fill="#7d95b5" stroke="#f0f4fa" stroke-width="1.200"/><path d="M3 8.500v10h3" fill="none" stroke="#f0f4fa" stroke-width="1.300"/></g>
<text x="1857.500" y="1070" font-family="Liberation Sans" font-size="14.800" fill="#eef3fa" letter-spacing="-0.300">12:55</text>
<rect x="1906.500" y="1046.500" width="14" height="34" fill="#6a7f9e" stroke="#4d607e"/><rect x="1907.500" y="1047.500" width="12" height="32" fill="none" stroke="#a9bbd4" stroke-opacity="0.600"/>
</svg>
<svg width="1920" height="53" viewBox="0 0 1920 53" style="position:absolute;left:0;top:0">
<defs>
<linearGradient id="tbb" x1="0" y1="0" x2="0" y2="1"><stop offset="0" stop-color="#c9dbf0"/><stop offset="0.48" stop-color="#b4cae6"/><stop offset="0.5" stop-color="#9ab4d6"/><stop offset="1" stop-color="#b6cdea"/></linearGradient>
<linearGradient id="tbc" x1="0" y1="0" x2="0" y2="1"><stop offset="0" stop-color="#eeb3a6"/><stop offset="0.48" stop-color="#dd8472"/><stop offset="0.5" stop-color="#cd4a30"/><stop offset="1" stop-color="#d9694a"/></linearGradient>
<radialGradient id="appg" cx="0.5" cy="0.5" r="0.5"><stop offset="0" stop-color="#7ed34a"/><stop offset="0.62" stop-color="#5fbf3a"/><stop offset="0.7" stop-color="#c9b420"/><stop offset="1" stop-color="#e6c52a"/></radialGradient>
</defs>
<g transform="translate(12 13) scale(0.9) translate(-12 -13)">
<path d="M7.5 2.200h9l6.300 6.300v9l-6.300 6.300h-9l-6.300-6.300v-9z" fill="#e6cc24" stroke="#c8961c" stroke-width="0.9"/>
<circle cx="12" cy="13" r="8" fill="#62c83c" stroke="#a8b428" stroke-width="0.8"/>
<text x="12" y="16.600" text-anchor="middle" font-family="Liberation Sans" font-weight="bold" font-size="9.500" fill="#8c2410" letter-spacing="-0.500">12</text>
</g>
<rect x="1797.5" y="2.500" width="37.5" height="20.500" rx="3" fill="url(#tbb)" stroke="#5b7397"/><rect x="1798.5" y="3.500" width="35.5" height="18.500" rx="2.200" fill="none" stroke="#ffffff" stroke-opacity="0.55"/>
<rect x="1838.5" y="2.500" width="37.5" height="20.500" rx="3" fill="url(#tbb)" stroke="#5b7397"/><rect x="1839.5" y="3.500" width="35.5" height="18.500" rx="2.200" fill="none" stroke="#ffffff" stroke-opacity="0.55"/>
<rect x="1879.5" y="2.500" width="38" height="20.500" rx="3" fill="url(#tbc)" stroke="#5b2a26"/><rect x="1880.5" y="3.500" width="36" height="18.500" rx="2.200" fill="none" stroke="#ffffff" stroke-opacity="0.55"/>
<rect x="1810.500" y="14.500" width="13" height="4" rx="0.800" fill="#fff" stroke="#4a5a74" stroke-width="0.900"/>
<rect x="1856" y="7" width="8" height="8" fill="none" stroke="#3c4c66" stroke-width="3.600"/><rect x="1856" y="7" width="8" height="8" fill="none" stroke="#fff" stroke-width="2"/>
<rect x="1852" y="11" width="8" height="7.500" fill="#9db5d6" stroke="#3c4c66" stroke-width="3.600"/><rect x="1852" y="11" width="8" height="7.500" fill="#9db5d6" stroke="#fff" stroke-width="2"/>
<path d="M1893.500 8.500l10 9M1903.500 8.500l-10 9" stroke="#5a2420" stroke-width="5" stroke-linecap="square"/><path d="M1893.500 8.500l10 9M1903.500 8.500l-10 9" stroke="#fff" stroke-width="3.200" stroke-linecap="square"/>
<rect x="7.500" y="29.500" width="19" height="19" fill="#fff" stroke="#101020" stroke-width="1.200"/><rect x="8" y="30" width="18" height="3.400" fill="#1414c0"/>
<rect x="9.500" y="35" width="13" height="6" fill="#d8dde6" stroke="#8a94a4" stroke-width="0.800"/><rect x="12" y="38.500" width="12.500" height="8" fill="#18c8c0" stroke="#0c2c34" stroke-width="1.200"/><path d="M13.500 44.500c2-3 4-4 6-1.500l3 1" fill="none" stroke="#0c5c64" stroke-width="1.100"/>
<rect x="1848.5" y="28.500" width="22" height="22" fill="#dbe7f7" stroke="#a3b8d6"/>
<rect x="1872.5" y="28.500" width="22" height="22" fill="#dbe7f7" stroke="#a3b8d6"/>
<rect x="1896.5" y="28.500" width="22" height="22" fill="#dbe7f7" stroke="#a3b8d6"/>
<rect x="1856" y="42" width="6" height="2" fill="#5c6c84"/>
<path d="M1881.500 38.500h5v-2.500h-5zM1879.500 42.500h5.500v-2.800h-5.500z" fill="#dbe7f7" stroke="#5c6c84" stroke-width="1.100"/><path d="M1881.500 36.300h5M1879.500 40h5.500" stroke="#5c6c84" stroke-width="1.600"/>
<path d="M1904 36.500l7 7M1911 36.500l-7 7" stroke="#4c5c74" stroke-width="2"/>
</svg>
<svg width="1920" height="120" viewBox="0 0 1920 120" style="position:absolute;left:0;top:0">
<defs><linearGradient id="gbx" x1="0" y1="0" x2="1" y2="1"><stop offset="0.35" stop-color="#fff"/><stop offset="1" stop-color="#b9c8ea"/></linearGradient></defs>
<rect x="1137.5" y="57.5" width="22.5" height="22" fill="#f7f7f7"/><path d="M1137.5 79.5v-22h22.5" fill="none" stroke="#8c8c8c"/><path d="M1137.5 79.5h22.5v-22" fill="none" stroke="#fff"/>
<rect x="118" y="90.5" width="22" height="21.5" fill="#f8f8f8"/><path d="M118.5 112v-21.5h21.5" fill="none" stroke="#8c8c8c"/><path d="M118.5 112h21.5v-21.5" fill="none" stroke="#fdfdfd"/>
<rect x="488" y="90.5" width="22" height="21.5" fill="#f8f8f8"/><path d="M488.5 112v-21.5h21.5" fill="none" stroke="#8c8c8c"/><path d="M488.5 112h21.5v-21.5" fill="none" stroke="#fdfdfd"/>
<rect x="510.5" y="90.5" width="22.0" height="21.5" fill="#f8f8f8"/><path d="M511.0 112v-21.5h21.5" fill="none" stroke="#8c8c8c"/><path d="M511.0 112h21.5v-21.5" fill="none" stroke="#fdfdfd"/>
<rect x="533" y="90.5" width="22.5" height="21.5" fill="#f8f8f8"/><path d="M533.5 112v-21.5h22.0" fill="none" stroke="#8c8c8c"/><path d="M533.5 112h22.0v-21.5" fill="none" stroke="#fdfdfd"/>
<rect x="631" y="90.5" width="22" height="21.5" fill="#f8f8f8"/><path d="M631.5 112v-21.5h21.5" fill="none" stroke="#8c8c8c"/><path d="M631.5 112h21.5v-21.5" fill="none" stroke="#fdfdfd"/>
<rect x="653.5" y="90.5" width="22.5" height="21.5" fill="#f8f8f8"/><path d="M654.0 112v-21.5h22.0" fill="none" stroke="#8c8c8c"/><path d="M654.0 112h22.0v-21.5" fill="none" stroke="#fdfdfd"/>
<rect x="807.5" y="90.5" width="22.0" height="21.5" fill="#f8f8f8"/><path d="M808.0 112v-21.5h21.5" fill="none" stroke="#8c8c8c"/><path d="M808.0 112h21.5v-21.5" fill="none" stroke="#fdfdfd"/>
<rect x="1168" y="90.5" width="22" height="21.5" fill="#f8f8f8"/><path d="M1168.5 112v-21.5h21.5" fill="none" stroke="#8c8c8c"/><path d="M1168.5 112h21.5v-21.5" fill="none" stroke="#fdfdfd"/>
<rect x="1190.5" y="90.5" width="22.5" height="21.5" fill="#f8f8f8"/><path d="M1191.0 112v-21.5h22.0" fill="none" stroke="#8c8c8c"/><path d="M1191.0 112h22.0v-21.5" fill="none" stroke="#fdfdfd"/>
<path d="M152.5 54v29.5" stroke="#8e8e8e"/><path d="M153.5 54v29.5" stroke="#fbfbfb"/>
<path d="M328.5 54v29.5" stroke="#8e8e8e"/><path d="M329.5 54v29.5" stroke="#fbfbfb"/>
<path d="M847.5 54v29.5" stroke="#8e8e8e"/><path d="M848.5 54v29.5" stroke="#fbfbfb"/>
<path d="M1005.5 54v29.5" stroke="#8e8e8e"/><path d="M1006.5 54v29.5" stroke="#fbfbfb"/>
<path d="M1191.5 54v29.5" stroke="#8e8e8e"/><path d="M1192.5 54v29.5" stroke="#fbfbfb"/>
<path d="M1275.5 54v29.5" stroke="#8e8e8e"/><path d="M1276.5 54v29.5" stroke="#fbfbfb"/>
<path d="M976.5 58v20" stroke="#b4b4b4"/>
<path d="M1065.5 58v20" stroke="#b4b4b4"/>
<path d="M1162.5 58v20" stroke="#b4b4b4"/>
<path d="M5 59v20" stroke="#b9b9b9" stroke-width="1.6" stroke-dasharray="1.6 2.2"/>
<path d="M159 59v20" stroke="#b9b9b9" stroke-width="1.6" stroke-dasharray="1.6 2.2"/>
<path d="M335 59v20" stroke="#b9b9b9" stroke-width="1.6" stroke-dasharray="1.6 2.2"/>
<path d="M854 59v20" stroke="#b9b9b9" stroke-width="1.6" stroke-dasharray="1.6 2.2"/>
<path d="M1012 59v20" stroke="#b9b9b9" stroke-width="1.6" stroke-dasharray="1.6 2.2"/>
<path d="M1198 59v20" stroke="#b9b9b9" stroke-width="1.6" stroke-dasharray="1.6 2.2"/>
<path d="M281.5 92v18" stroke="#a6a6a6"/>
<path d="M309.5 92v18" stroke="#a6a6a6"/>
<path d="M383.5 92v18" stroke="#a6a6a6"/>
<path d="M434.5 92v18" stroke="#a6a6a6"/>
<path d="M485.5 92v18" stroke="#a6a6a6"/>
<path d="M582.5 92v18" stroke="#a6a6a6"/>
<path d="M679.5 92v18" stroke="#a6a6a6"/>
<path d="M776.5 92v18" stroke="#a6a6a6"/>
<path d="M804.5 92v18" stroke="#a6a6a6"/>
<path d="M1062.5 92v18" stroke="#a6a6a6"/>
<path d="M1109.5 92v18" stroke="#a6a6a6"/>
<path d="M1137.5 92v18" stroke="#a6a6a6"/>
<path d="M1165.5 92v18" stroke="#a6a6a6"/>
<path d="M1216.5 92v18" stroke="#a6a6a6"/>
<path d="M1290.5 92v18" stroke="#a6a6a6"/>
<path d="M1402.5 92v18" stroke="#a6a6a6"/>
<path d="M1430.5 92v18" stroke="#a6a6a6"/>
<path d="M1481.5 92v18" stroke="#a6a6a6"/>
<g transform="translate(14,60)"><path d="M4.5 3.5h6l3 3v8.5h-9z" fill="#f6f6f6" stroke="#a9a9a9"/><path d="M10.5 3.5v3h3" fill="none" stroke="#a9a9a9"/>
<path d="M3 0.5v5M0.5 3h5M1.2 1.2l3.6 3.6M4.8 1.2l-3.6 3.6" stroke="#c2c2c2" stroke-width="0.9"/></g>
<g transform="translate(36,60)"><path d="M1.5 13.5v-9h4l1.5 1.5h6v2" fill="#dcdcdc" stroke="#a9a9a9"/><path d="M1.5 13.5l2.5-6h11l-2.5 6z" fill="#c9c9c9" stroke="#a9a9a9"/>
<path d="M10 3.5c1.5-1.8 3.5-1.5 4.5 0" fill="none" stroke="#bdbdbd"/></g>
<g transform="translate(59,60)"><path d="M1.5 1.5h12l1 1v12h-13z" fill="#bcbcbc" stroke="#a9a9a9"/><rect x="4" y="2" width="8" height="5.5" fill="#f1f1f1"/><rect x="4.5" y="10" width="7" height="4.5" fill="#9f9f9f"/><rect x="6" y="11" width="2" height="3" fill="#ededed"/></g>
<g transform="translate(83,60)"><path d="M2.5 1.5h8l3 3v10h-11z" fill="#f3f3f3" stroke="#a9a9a9"/><path d="M10.5 1.5v3h3" fill="none" stroke="#a9a9a9"/>
<path d="M5 8h5.5v-1.6l2 2.1M11 10.5h-5.5v1.6l-2-2.1" fill="none" stroke="#ababab" stroke-width="1.2"/></g>
<g transform="translate(105,60)"><path d="M1.5 1.5h8l2.5 2.5v9.5h-10.5z" fill="#fdfdfd" stroke="#6c7a8c"/><path d="M9.5 1.5v2.5h2.5" fill="none" stroke="#6c7a8c"/>
<path d="M10.5 10.5l4 4" stroke="#c9893a" stroke-width="2.6" stroke-linecap="round"/><circle cx="8.2" cy="7.8" r="3.6" fill="#e8f0f8" fill-opacity="0.9" stroke="#707880" stroke-width="1.2"/></g>
<g transform="translate(128,60)"><path d="M4 6.5l1.5-5h7l1.5 5" fill="#f4f6fa" stroke="#7d8ea6"/><path d="M6 3.5h5M5.6 5h6" stroke="#9aa6b8" stroke-width="0.8"/>
<rect x="1.5" y="6.5" width="14" height="6" rx="1.2" fill="#c8d6ea" stroke="#5e7392"/><rect x="3" y="10.5" width="11" height="4" fill="#eef2f8" stroke="#6e7f99"/><rect x="11" y="11.5" width="2.4" height="1.8" fill="#23b13a"/></g>
<g transform="translate(166,60)"><path d="M3 6.5h6a3.6 3.6 0 0 1 0 7.2h-1" fill="none" stroke="#b0b0b0" stroke-width="1.8"/><path d="M5.5 3l-3.7 3.5l3.7 3.5" fill="none" stroke="#b0b0b0" stroke-width="1.8"/></g>
<g transform="translate(191,60)"><path d="M13 6.5h-6a3.6 3.6 0 0 0 0 7.2h1" fill="none" stroke="#b0b0b0" stroke-width="1.8"/><path d="M10.5 3l3.7 3.5l-3.7 3.5" fill="none" stroke="#b0b0b0" stroke-width="1.8"/></g>
<g transform="translate(214,60)"><path d="M5.5 1l4 10M10.5 1l-4 10" stroke="#b2b2b2" stroke-width="1.5" fill="none"/><circle cx="5" cy="13" r="2" fill="none" stroke="#a8a8a8" stroke-width="1.5"/><circle cx="11" cy="13" r="2" fill="none" stroke="#a8a8a8" stroke-width="1.5"/></g>
<g transform="translate(236,60)"><path d="M1.5 1.5h5l2 2v7h-7z" fill="#f1f1f1" stroke="#b4b4b4"/><path d="M6.5 5.5h5l2.5 2.5v7h-7.5z" fill="#f1f1f1" stroke="#b0b0b0"/><path d="M8 9.5h4M8 11.5h4M8 13.5h4" stroke="#c4c4c4" stroke-width="0.8"/></g>
<g transform="translate(259,60)"><rect x="1.5" y="2.5" width="11" height="12" rx="1" fill="#bdbdbd" stroke="#a5a5a5"/><rect x="4.5" y="1" width="5" height="3" rx="0.8" fill="#d9d9d9" stroke="#a1a1a1"/><path d="M7.5 7.5h5l2 2v5h-7z" fill="#f0f0f0" stroke="#aaaaaa"/><path d="M9 11h4M9 13h4" stroke="#c4c4c4" stroke-width="0.8"/></g>
<g transform="translate(283,60)"><path d="M2.5 2.5l11 12M13.5 2l-11 12" stroke="#b4b4b4" stroke-width="1.9" stroke-linecap="round"/></g>
<g transform="translate(304,60)"><rect x="0.5" y="1.5" width="13" height="9" fill="none" stroke="#333a48" stroke-width="1.2" stroke-dasharray="2.2 1.2"/><path d="M2.5 4.5h8.5M2.5 6.8h6" stroke="#8e96a6" stroke-width="1"/>
<path d="M9.5 6.5v8l2-1.8l1.4 3l1.4-0.7l-1.4-2.9h2.6z" fill="#eef3fb" stroke="#5f7394" stroke-width="0.9"/></g>
<g transform="translate(344,60)"><g fill="none" stroke="#5a5a5a" stroke-width="1.15"><path d="M8 1v7M3.8 8.5h8.4M5.4 11h5.2M7 13.5h2"/></g></g>
<g transform="translate(363,60)"><path d="M3.5 6.5h9l-4.5 5z" fill="#9b9b9b"/></g>
<g transform="translate(385,60)"><path d="M0 8h3.200l1.200-2l2.400 4l2.400-4l2.400 4l1.200-2h3.200" fill="none" stroke="#666" stroke-width="1"/></g>
<g transform="translate(406,60)"><path d="M3.5 6.5h9l-4.5 5z" fill="#9b9b9b"/></g>
<g transform="translate(427,60)"><g fill="none" stroke="#5a5a5a" stroke-width="1.15"><path d="M0 8h6.6M9.4 8h6.6"/><path d="M6.6 3v10M9.4 3v10" stroke-width="1.5"/></g></g>
<g transform="translate(448,60)"><path d="M3.5 6.5h9l-4.5 5z" fill="#9b9b9b"/></g>
<g transform="translate(468,60)"><g fill="none" stroke="#5a5a5a" stroke-width="1.15"><path d="M0 8h2.6c0.4-4 2-4 2.4 0c0.4 4 1.6 4 2 0c0.4-4 1.6-4 2 0c0.4 4 1.6 4 2 0c0.4-4 2-4 2.4 0h2.6" stroke-width="1"/></g></g>
<g transform="translate(489,60)"><path d="M3.5 6.5h9l-4.5 5z" fill="#9b9b9b"/></g>
<g transform="translate(511,60)"><g fill="none" stroke="#5a5a5a" stroke-width="1.15"><path d="M0 8h16"/><path d="M5 3.5v9l6-4.5z" fill="#444" stroke="#444"/><path d="M11.2 3.2v9.6" stroke-width="1.6" stroke="#444"/></g></g>
<g transform="translate(531,60)"><path d="M3.5 6.5h9l-4.5 5z" fill="#9b9b9b"/></g>
<g transform="translate(553,60)"><g fill="none" stroke="#5a5a5a" stroke-width="1.15"><path d="M0.5 8h5.3"/><path d="M6 2.5v11" stroke-width="1.7"/><path d="M6 6.5l6-5" stroke="#9a9a9a"/><path d="M6 9.5l6.5 5.5"/><path d="M8 10l4 1.2l-2.3 2.6z" fill="#4a4a4a" stroke="none"/></g></g>
<g transform="translate(574,60)"><path d="M3.5 6.5h9l-4.5 5z" fill="#9b9b9b"/></g>
<g transform="translate(596,60)"><g fill="none" stroke="#5a5a5a" stroke-width="1.15"><path d="M0 8h6"/><path d="M6.3 3v10" stroke-width="1.4"/><path d="M8.8 1.5v3.4M8.8 6.3v3.4M8.8 11.1v3.4" stroke-width="1.5"/><path d="M8.8 3.2h6v-2.5M8.8 12.8h6v2.5M14.8 8v4.8M8.8 8h6"/><path d="M9.3 8l3-1.8v3.6z" fill="#444" stroke="none"/></g></g>
<g transform="translate(616,60)"><path d="M3.5 6.5h9l-4.5 5z" fill="#9b9b9b"/></g>
<g transform="translate(637,60)"><g fill="none" stroke="#5e5e5e" stroke-width="1.2"><path d="M3 1.5v13l12-6.5z" stroke-dasharray="2.6 1.2"/><path d="M0 4.5h3M0 11.5h3" stroke-width="1"/><path d="M5 4.5h2.4M6.2 3.3v2.4M5 11.3h2.4" stroke-width="0.9"/></g></g>
<g transform="translate(658,60)"><path d="M3.5 6.5h9l-4.5 5z" fill="#9b9b9b"/></g>
<g transform="translate(679,60)"><g fill="none" stroke="#5a5a5a" stroke-width="1.15"><rect x="1.5" y="3.5" width="12.5" height="9" rx="2.2" stroke-width="1.3"/><path d="M3.4 10v-4h2.6v4h2.8v-4h2.6v4" stroke-width="1.1"/><path d="M14 8h2M0 8h1.5"/></g></g>
<g transform="translate(699,60)"><path d="M3.5 6.5h9l-4.5 5z" fill="#9b9b9b"/></g>
<g transform="translate(721,60)"><g fill="none" stroke="#5a5a5a" stroke-width="1.15"><path d="M0 8h6M9 8h7"/><path d="M6.2 5v6" stroke-width="1.3"/><path d="M9 2.5v11" stroke-width="1.3"/></g></g>
<g transform="translate(741,60)"><path d="M3.5 6.5h9l-4.5 5z" fill="#9b9b9b"/></g>
<g transform="translate(764,60)"><g fill="none" stroke="#5a5a5a" stroke-width="1.15"><path d="M8 0v3.5M8 12.5v3.5"/><circle cx="8" cy="8" r="4.5" stroke-width="1.3"/><path d="M8 10.6v-4.8M6.3 7.3l1.7-2l1.7 2" stroke-width="1"/></g></g>
<g transform="translate(784,60)"><path d="M3.5 6.5h9l-4.5 5z" fill="#9b9b9b"/></g>
<g transform="translate(806,60)"><g fill="none" stroke="#5a5a5a" stroke-width="1.15"><path d="M8 0.5v3M8 12.5v3"/><circle cx="8" cy="8" r="4.6" stroke-width="1.4"/><path d="M11.8 2h2.2M12.9 0.9v2.2M11.8 13.8h2.2" stroke-width="0.9" stroke="#8a8a8a"/></g></g>
<g transform="translate(826,60)"><path d="M3.5 6.5h9l-4.5 5z" fill="#9b9b9b"/></g>
<g transform="translate(862,60)"><rect x="1.5" y="1.5" width="8" height="6" fill="#f4f8ff" stroke="#44679f"/><rect x="1.5" y="1.5" width="8" height="2.2" fill="#3d68b8" stroke="#3a5f9f" stroke-width="0.6"/><rect x="4" y="4.5" width="8" height="6" fill="#f4f8ff" stroke="#44679f"/><rect x="4" y="4.5" width="8" height="2.2" fill="#3d68b8" stroke="#3a5f9f" stroke-width="0.6"/><rect x="6.5" y="7.5" width="8" height="6.5" fill="#f4f8ff" stroke="#44679f"/><rect x="6.5" y="7.5" width="8" height="2.2" fill="#3d68b8" stroke="#3a5f9f" stroke-width="0.6"/></g>
<g transform="translate(885,60)"><defs><linearGradient id="gtv_39" x1="0" y1="0" x2="1" y2="0"><stop offset="0" stop-color="#9fb8e2"/><stop offset="1" stop-color="#fff"/></linearGradient></defs><rect x="1.5" y="1.5" width="6" height="13" fill="url(#gtv_39)" stroke="#44679f"/><rect x="8.5" y="1.5" width="6" height="13" fill="url(#gtv_39)" stroke="#44679f"/><rect x="1.5" y="1.5" width="13" height="2" fill="#3d68b8"/></g>
<g transform="translate(908,60)"><rect x="1.5" y="1.5" width="13" height="13" fill="#e6eefb" stroke="#44679f"/><rect x="2" y="2" width="12" height="2.6" fill="#3d68b8"/><rect x="2" y="6.2" width="12" height="2.6" fill="#4f79c6"/><rect x="2" y="10.4" width="12" height="2.6" fill="#4f79c6"/></g>
<g transform="translate(931,60)"><defs><linearGradient id="gov_41" x1="0" y1="0" x2="1" y2="1"><stop offset="0" stop-color="#fff"/><stop offset="1" stop-color="#b4c8ea"/></linearGradient></defs><rect x="1.5" y="1.5" width="13" height="13" fill="url(#gov_41)" stroke="#44679f"/><rect x="1.5" y="1.5" width="13" height="2" fill="#3d68b8"/><path d="M7.5 3.5v5h7" fill="none" stroke="#44679f" stroke-width="1.3"/></g>
<g transform="translate(954,60)"><defs><linearGradient id="gmx_42" x1="0" y1="0" x2="1" y2="1"><stop offset="0" stop-color="#fff"/><stop offset="1" stop-color="#c3d3ef"/></linearGradient></defs><rect x="1" y="2" width="14" height="12" fill="url(#gmx_42)" stroke="#44679f"/><rect x="1" y="2" width="14" height="2.4" fill="#3d68b8"/></g>
<g transform="translate(982,60)"><rect x="2.5" y="0.8" width="11" height="14.4" rx="1.3" fill="#a9b7de" stroke="#5b6ca8"/><rect x="4" y="2.2" width="8" height="2.8" fill="#dfe6f8" stroke="#6d7db3" stroke-width="0.6"/><rect x="4" y="6.6" width="1.9" height="1.8" fill="#5463a6"/><rect x="7.05" y="6.6" width="1.9" height="1.8" fill="#5463a6"/><rect x="10.1" y="6.6" width="1.9" height="1.8" fill="#5463a6"/><rect x="4" y="9.4" width="1.9" height="1.8" fill="#5463a6"/><rect x="7.05" y="9.4" width="1.9" height="1.8" fill="#5463a6"/><rect x="10.1" y="9.4" width="1.9" height="1.8" fill="#5463a6"/><rect x="4" y="12.2" width="1.9" height="1.8" fill="#5463a6"/><rect x="7.05" y="12.2" width="1.9" height="1.8" fill="#5463a6"/><rect x="10.1" y="12.2" width="1.9" height="1.8" fill="#5463a6"/></g>
<g transform="translate(1020,60)"><path d="M1 3.5h4M1 5.5h3M1 7.5h2" stroke="#b5b5b5"/><path d="M5 4h6.5v-2l3.5 3l-3.5 3v-2h-6.5" fill="#dcdcdc" stroke="#b0b0b0" stroke-width="0.8"/><circle cx="6" cy="11.5" r="3" fill="#e8e8e8" stroke="#a9a9a9"/><path d="M5.2 10l2.4 1.5l-2.4 1.5z" fill="#999"/><rect x="10.5" y="7.5" width="2.2" height="7" rx="1" fill="#d6d6d6" stroke="#ababab" stroke-width="0.8"/><rect x="13.2" y="7.5" width="2.2" height="7" rx="1" fill="#d6d6d6" stroke="#ababab" stroke-width="0.8"/></g>
<g transform="translate(1043,60)"><rect x="0.8" y="1.5" width="14.6" height="13" fill="#f2f6fe" stroke="#44679f"/><rect x="0.8" y="1.5" width="14.6" height="2.6" fill="#3d68b8"/><rect x="7" y="6" width="6" height="5" fill="#d9906c" stroke="#b8c3dc" stroke-width="1.2"/></g>
<g transform="translate(1071,60)"><rect x="1" y="1" width="13" height="13.5" fill="#f6f8fc" stroke="#7082a4"/><path d="M3 3.2h2v2h-2zM3 7h2M3 10.5h2M7 4h5M7 7.5h3" fill="none" stroke="#54627e" stroke-width="1"/><path d="M3 7l1 1.2l1.4-2.2M3 10.5l1 1.2l1.4-2.2" fill="none" stroke="#2c3c58" stroke-width="1.1"/><circle cx="11.5" cy="11.5" r="3.6" fill="#f2c81e" stroke="#c99a10" stroke-width="1.6" stroke-dasharray="1.5 1.1"/><circle cx="11.5" cy="11.5" r="1.3" fill="#fff4b8"/></g>
<g transform="translate(1093,60)"><path d="M7 9.5c-2.500 0.500-5-0.500-5-2.800c0-2 2-3 4.500-2.400" fill="none" stroke="#2a62c4" stroke-width="2"/><path d="M5 7l3.600 2.300l-3.800 2.600z" fill="#2a62c4"/><path d="M9 5.500h6M9 7.500h6M9 9.500h6M9 11.500h6M9 13.500h6" stroke="#111" stroke-width="1"/></g>
<g transform="translate(1116,60)"><path d="M3 13.5l9-10" stroke="#7e7e7e" stroke-width="2.2" stroke-linecap="round"/><path d="M10.6 1.5a3 3 0 0 1 3.8 3.8l-1.8-1.2l-1.2 0.4z" fill="#9a9a9a" stroke="#666" stroke-width="0.7"/><path d="M13 13.5l-7.5-8" stroke="#b9842f" stroke-width="2.2" stroke-linecap="round"/><path d="M1.5 5l3-3.5l3.5 1.5l-4 4.5z" fill="#8b8b8b" stroke="#555" stroke-width="0.7"/></g>
<g transform="translate(1141,60)"><path d="M2.5 0.5v15M0.5 3.5h15M0.5 13h15" stroke="#5b6780" stroke-width="1.1" fill="none"/><path d="M2.5 11l3-4l2 2.4l3-4.4l2 3l2.5-3" fill="none" stroke="#1f55b5" stroke-width="1.5"/></g>
<g transform="translate(1168,60)"><path d="M3 0.5v15M0.5 3h15M0.5 12.5h11" stroke="#5b6780" stroke-width="1.1" fill="none"/><path d="M3 10l3-4l2 2.4l3-4.4" fill="none" stroke="#1f55b5" stroke-width="1.5"/><path d="M6.5 14l1-3l6-6l2 2l-6 6z" fill="#f0b63c" stroke="#b5642c" stroke-width="0.8"/><path d="M12.6 5.9l2 2" stroke="#d9534a" stroke-width="1.6"/></g>
<g transform="translate(1206,60)"><rect x="1" y="2" width="14" height="12.5" fill="#ededed" stroke="#b4b4b4"/><rect x="1" y="2" width="14" height="2" fill="#c4c4c4"/><rect x="1.5" y="4" width="4.5" height="10" fill="#d3d3d3"/><path d="M2.5 6h2.5M2.5 8h2.5M2.5 10h2.5M2.5 12h2.5" stroke="#a9a9a9" stroke-width="0.8"/></g>
<g transform="translate(1228,60)"><rect x="1" y="0.8" width="13" height="14" fill="#f4f6fb" stroke="#7082a4"/><circle cx="7" cy="5.3" r="2.6" fill="#8f9cc4" stroke="#5a6a9a" stroke-width="0.7"/><path d="M2.5 13.5c0-4 2-5.2 4.5-5.2s4.5 1.2 4.5 5.2z" fill="#6f7fb8" stroke="#4e5d94" stroke-width="0.7"/><circle cx="11.3" cy="11.5" r="3.5" fill="#f2c81e" stroke="#c99a10" stroke-width="1.7" stroke-dasharray="1.5 1.1"/><circle cx="11.3" cy="11.5" r="1.3" fill="#fff4b8"/></g>
<g transform="translate(1252,60)"><defs><radialGradient id="ggl_53" cx="0.35" cy="0.3" r="0.8"><stop offset="0" stop-color="#7cc4f4"/><stop offset="1" stop-color="#1a5fb4"/></radialGradient></defs><circle cx="7.2" cy="7" r="6.4" fill="url(#ggl_53)" stroke="#2a5a9a" stroke-width="0.6"/><path d="M3 3.5c2-2.6 5-2 5.5-0.5c0.5 1.6-1.5 1.4-1.5 3c0 1.4 2.4 1 2.4 3c0 1.6-2 3-3.5 3.5c-2-1-1-3-2.2-4.3c-1-1-2-2.5-0.7-4.7z" fill="#3cb54a"/><circle cx="11.8" cy="11.8" r="3.5" fill="#f2c81e" stroke="#c99a10" stroke-width="1.7" stroke-dasharray="1.5 1.1"/><circle cx="11.8" cy="11.8" r="1.3" fill="#6a5040"/></g>
<g transform="translate(10,93)"><path d="M4.5 1.5v11.5l2.7-2.5l2 4.3l1.8-0.9l-2-4.1h3.7z" fill="#f4f6fb" stroke="#4c5f84" stroke-width="1.1"/></g>
<g transform="translate(34,93)"><path d="M5 14c-1.5-1.5-3-3.5-3.3-5c0.6-0.8 1.6-0.3 2.3 0.8v-5.6c0-1 1.6-1 1.6 0v-1.4c0-1 1.7-1 1.7 0v1c0-1 1.7-1 1.7 0.2v1c0.2-0.9 1.6-0.8 1.6 0.3v5.2c0 1.4-0.6 2.6-1.3 3.5z" fill="#fdfdfd" stroke="#444" stroke-width="0.9"/><path d="M5.6 4.2v3.6M7.3 3.8v4M9 4.4v3.4" stroke="#555" stroke-width="0.7"/></g>
<g transform="translate(56,93)"><defs><linearGradient id="gsh_56" x1="0" y1="0" x2="1" y2="1"><stop offset="0" stop-color="#f2f7ff"/><stop offset="1" stop-color="#8eb1e6"/></linearGradient></defs><circle cx="10.8" cy="5.8" r="5" fill="url(#gsh_56)" stroke="#4d72b4"/><rect x="0.8" y="2.8" width="8" height="8.4" fill="url(#gsh_56)" stroke="#4d72b4"/><path d="M5.5 8.6c0-1.4 5.6-1.4 5.6 0v5.6c0 1.4-5.6 1.4-5.6 0z" fill="url(#gsh_56)" stroke="#4d72b4"/></g>
<g transform="translate(76,93)"><path d="M3.5 6.5h9l-4.5 5z" fill="#000"/></g>
<g transform="translate(98,93)"><defs><linearGradient id="gim_58" x1="0" y1="0" x2="0.3" y2="1"><stop offset="0" stop-color="#3f88d6"/><stop offset="0.45" stop-color="#d9ecf4"/><stop offset="0.7" stop-color="#3f9c86"/><stop offset="1" stop-color="#1d5fa8"/></linearGradient></defs><rect x="0.6" y="2" width="14.8" height="12.4" fill="#f4f4f4" stroke="#9aa3b4"/><rect x="2" y="3.4" width="12" height="9.6" fill="url(#gim_58)"/></g>
<g transform="translate(121,93)"><rect x="0.5" y="0.5" width="15" height="14" fill="#fff" stroke="#333d55" stroke-width="1"/><path d="M1 8l3.5-3.5l2.5 3l4-4l2 3l2.5-1.5" fill="none" stroke="#3b4d78" stroke-width="1"/><path d="M10 10.5l4 3.8" stroke="#d08a36" stroke-width="2.6" stroke-linecap="round"/><circle cx="7.6" cy="8.2" r="3.3" fill="#e9eef6" stroke="#8a94a6" stroke-width="1"/></g>
<g transform="translate(144,93)"><rect x="0.5" y="0.5" width="15" height="14" fill="#fff" stroke="#48587c" stroke-width="1"/><path d="M1 7.5l3.5-4.5l3 5l3-6l2.5 4.5l2.3-2" fill="none" stroke="#1c2a4e" stroke-width="1.2"/><path d="M4.5 2v7M11.5 2v7" stroke="#111" stroke-width="1" stroke-dasharray="1.3 1"/><path d="M3 10.8h3M7.3 10.8h1M9.5 10.8h4M3 12.8h3M7.3 12.8h1M9.5 12.8h4" stroke="#25386a" stroke-width="1"/></g>
<g transform="translate(167,93)"><rect x="0.5" y="0.5" width="15" height="14" fill="url(#gbx)" stroke="#48587c" stroke-width="1"/><path d="M2.5 12.5c5-1 8.5-4 10.5-9.5" fill="none" stroke="#e5a54a" stroke-width="1.3"/><path d="M1.5 3.3h13" stroke="#3564bc" stroke-width="1.2"/><path d="M4 0.8l-3 2.5l3 2.5M12 0.8l3 2.5l-3 2.5" fill="none" stroke="#3564bc" stroke-width="1.3"/><rect x="6" y="1" width="4" height="4.6" fill="#fff"/></g>
<g transform="translate(190,93)"><rect x="0.5" y="0.5" width="15" height="14" fill="url(#gbx)" stroke="#48587c" stroke-width="1"/><path d="M6.5 12.5c4-1 6-4 7-9.5" fill="none" stroke="#e5a54a" stroke-width="1.3"/><path d="M3.6 1.5v13" stroke="#3564bc" stroke-width="1.2"/><path d="M1.2 4l2.4-3l2.4 3M1.2 12l2.4 3l2.4-3" fill="none" stroke="#3564bc" stroke-width="1.3"/></g>
<g transform="translate(213,93)"><rect x="0.5" y="0.5" width="15" height="14" fill="url(#gbx)" stroke="#48587c" stroke-width="1"/><path d="M2.5 12.5c5-1 8.5-4 10.5-9.5" fill="none" stroke="#e5a54a" stroke-width="1.3"/><path d="M2 2.2l4.6 4.6" stroke="#3564bc" stroke-width="1.2"/><path d="M3.4 7.2h3.6v-3.6" fill="none" stroke="#3564bc" stroke-width="1.3"/></g>
<g transform="translate(236,93)"><rect x="0.5" y="0.5" width="15" height="14" fill="url(#gbx)" stroke="#48587c" stroke-width="1"/><path d="M2.5 12.5c5-1 8.5-4 10.5-9.5" fill="none" stroke="#e9a03c" stroke-width="1.3"/><text x="2.2" y="11.3" font-family="Liberation Serif" font-style="italic" font-weight="bold" font-size="11.5" fill="#111">fx</text></g>
<g transform="translate(259,93)"><text x="8" y="14.6" text-anchor="middle" font-family="Liberation Serif" font-weight="bold" font-size="19" fill="#000" stroke="#000" stroke-width="0.7">T</text></g>
<g transform="translate(286,93)"><rect x="1" y="5.5" width="11" height="9.5" fill="#eef2fa" stroke="#5f7296"/><rect x="1" y="5.5" width="11" height="2.2" fill="#9fb2d8"/><path d="M3 10h1.5M6 10h4M3 12.5h1.5M6 12.5h4" stroke="#6a7ea8" stroke-width="1"/><path d="M4.5 3.5l3-2.8h7l1 3.8l-3 2.6l-5-0.5z" fill="#e3c23c" stroke="#8a7a2a" stroke-width="0.8"/><path d="M11 5l4-1l-1 3z" fill="#4c7a3a"/></g>
<g transform="translate(315,93)"><defs><linearGradient id="gpl_67" x1="0" y1="0" x2="1" y2="0"><stop offset="0" stop-color="#2d8a24"/><stop offset="1" stop-color="#7ed668"/></linearGradient></defs><path d="M5 2.5v11l6.5-5.5z" fill="url(#gpl_67)" stroke="#2b7a22" stroke-width="0.8"/></g>
<g transform="translate(338,93)"><defs><linearGradient id="gst_68" x1="0" y1="0" x2="1" y2="1"><stop offset="0" stop-color="#f4f4f4"/><stop offset="1" stop-color="#bdbdbd"/></linearGradient></defs><rect x="4" y="4" width="8.5" height="8.5" fill="url(#gst_68)" stroke="#d0d0d0" stroke-width="0.8"/></g>
<g transform="translate(361,93)"><rect x="4.8" y="3.5" width="2.4" height="9" fill="#c6c6c6" stroke="#b0b0b0" stroke-width="0.6"/><rect x="9.2" y="3.5" width="2.4" height="9" fill="#c6c6c6" stroke="#b0b0b0" stroke-width="0.6"/></g>
<g transform="translate(389,93)"><rect x="0.5" y="0.5" width="15" height="14" fill="#e9ecef" stroke="#a7a9b2" stroke-width="1"/><path d="M5.5 1.5v13M1 8h14" stroke="#c7d0dc" stroke-width="0.8"/><path d="M2 14l3.8-5l3.4-1.6l3.6-4.4" fill="none" stroke="#cc4350" stroke-width="1.3"/><rect x="1.6" y="10.8" width="3.2" height="3.2" fill="#cc4350" stroke="#cc4350" stroke-width="1"/><rect x="5.0" y="6.800000000000001" width="3.2" height="3.2" fill="#cc4350" stroke="#cc4350" stroke-width="1"/><rect x="10.0" y="2.6" width="3.2" height="3.2" fill="#cc4350" stroke="#cc4350" stroke-width="1"/></g>
<g transform="translate(412,93)"><rect x="0.5" y="0.5" width="15" height="14" fill="#e9ecef" stroke="#a7a9b2" stroke-width="1"/><path d="M5.5 1.5v13M1 8h14" stroke="#c7d0dc" stroke-width="0.8"/><path d="M2 14l3.8-5l3.4-1.6l3.6-4.4" fill="none" stroke="#cc4350" stroke-width="1.3"/><rect x="1.6" y="10.8" width="3.2" height="3.2" fill="#fff" stroke="#cc4350" stroke-width="1"/><rect x="5.0" y="6.800000000000001" width="3.2" height="3.2" fill="#fff" stroke="#cc4350" stroke-width="1"/><rect x="10.0" y="2.6" width="3.2" height="3.2" fill="#fff" stroke="#cc4350" stroke-width="1"/></g>
<g transform="translate(440,93)"><rect x="0.5" y="1.5" width="15" height="13" fill="url(#gbx)" stroke="#48587c" stroke-width="1"/><rect x="2.8" y="3.8" width="10.4" height="8.4" fill="#fff" stroke="#e28a1c" stroke-width="1.7" stroke-dasharray="1.5 0.9"/></g>
<g transform="translate(463,93)"><rect x="0.5" y="1.5" width="15" height="13" fill="url(#gbx)" stroke="#48587c" stroke-width="1"/><path d="M3.3 5.2h3.4M5 3.5v3.4" stroke="#e28a1c" stroke-width="1.1"/><path d="M9.3 5.2h3.4M11 3.5v3.4" stroke="#e28a1c" stroke-width="1.1"/><path d="M3.3 10.8h3.4M5 9.100000000000001v3.4" stroke="#e28a1c" stroke-width="1.1"/><path d="M9.3 10.8h3.4M11 9.100000000000001v3.4" stroke="#e28a1c" stroke-width="1.1"/></g>
<g transform="translate(491,93)"><rect x="0.5" y="1.5" width="15" height="13" fill="url(#gbx)" stroke="#48587c" stroke-width="1"/><path d="M4.4 3.5v9M6.8 3.5v9M9.2 3.5v9M11.6 3.5v9" stroke="#e8a33a" stroke-width="1.1"/></g>
<g transform="translate(514,93)"><rect x="0.5" y="1.5" width="15" height="13" fill="url(#gbx)" stroke="#48587c" stroke-width="1"/><path d="M3 4.6h10M3 6.8h10M3 9h10M3 11.2h10" stroke="#e8a33a" stroke-width="1.1"/></g>
<g transform="translate(537,93)"><rect x="0.5" y="1.5" width="15" height="13" fill="url(#gbx)" stroke="#48587c" stroke-width="1"/><path d="M5.6 3.5v9M8.2 3.5v9M10.8 3.5v9" stroke="#e8a33a" stroke-width="1.1"/></g>
<g transform="translate(560,93)"><rect x="0.5" y="1.5" width="15" height="13" fill="url(#gbx)" stroke="#48587c" stroke-width="1"/><path d="M6.2 3.5v9M10 3.5v9" stroke="#e8a33a" stroke-width="1.1"/></g>
<g transform="translate(588,93)"><rect x="0.5" y="1.5" width="15" height="13" fill="url(#gbx)" stroke="#48587c" stroke-width="1"/><path d="M2.5 8h11" stroke="#111" stroke-width="2"/></g>
<g transform="translate(610,93)"><rect x="0.5" y="1.5" width="15" height="13" fill="url(#gbx)" stroke="#48587c" stroke-width="1"/><path d="M8.5 3v10.500M3 8.500h10.500" stroke="#111" stroke-width="1" stroke-dasharray="1.500 1"/></g>
<g transform="translate(635,93)"><rect x="0.5" y="0.5" width="15" height="14" fill="url(#gbx)" stroke="#48587c" stroke-width="1"/><path d="M2 3c5 0.5 9 3.5 11.5 10" fill="none" stroke="#e8a04c" stroke-width="1.2"/><path d="M1.5 11.3h13" stroke="#1e44c8" stroke-width="1.2" stroke-dasharray="1.6 1"/></g>
<g transform="translate(658,93)"><rect x="0.5" y="0.5" width="15" height="14" fill="url(#gbx)" stroke="#48587c" stroke-width="1"/><path d="M2 3c5 0.5 9 3.5 11.5 10" fill="none" stroke="#e8a04c" stroke-width="1.2"/><path d="M4.8 2.5v8" stroke="#d81818" stroke-width="1.4"/><path d="M2.4 8.5l2.4 3l2.4-3z" fill="#d81818"/></g>
<g transform="translate(684,93)"><defs><radialGradient id="gba_82" cx="0.4" cy="0.3" r="0.8"><stop offset="0" stop-color="#fff"/><stop offset="0.6" stop-color="#bcd2f2"/><stop offset="1" stop-color="#6a92d2"/></radialGradient></defs><circle cx="7.5" cy="7.5" r="6.8" fill="url(#gba_82)" stroke="#5a74a8" stroke-width="1"/><text x="7.5" y="11" text-anchor="middle" font-family="Liberation Serif" font-weight="bold" font-size="11" fill="#111">x</text><path d="M11.5 15.5l2-3l2 3z" fill="#e8a33a" stroke="#b87a1e" stroke-width="0.5"/></g>
<g transform="translate(708,93)"><defs><radialGradient id="gba_83" cx="0.4" cy="0.3" r="0.8"><stop offset="0" stop-color="#fff"/><stop offset="0.6" stop-color="#bcd2f2"/><stop offset="1" stop-color="#6a92d2"/></radialGradient></defs><circle cx="7.5" cy="7.5" r="6.8" fill="url(#gba_83)" stroke="#5a74a8" stroke-width="1"/><text x="7.5" y="10" text-anchor="middle" font-family="Liberation Serif" font-weight="bold" font-size="11" fill="#111">y</text><path d="M11.5 15.5l2-3l2 3z" fill="#e8a33a" stroke="#b87a1e" stroke-width="0.5"/></g>
<g transform="translate(730,93)"><defs><radialGradient id="gba_84" cx="0.4" cy="0.3" r="0.8"><stop offset="0" stop-color="#fff"/><stop offset="0.6" stop-color="#bcd2f2"/><stop offset="1" stop-color="#6a92d2"/></radialGradient></defs><circle cx="7.5" cy="7.5" r="6.8" fill="url(#gba_84)" stroke="#5a74a8" stroke-width="1"/><text x="6.4" y="11" text-anchor="middle" font-family="Liberation Serif" font-style="italic" font-size="11.5" fill="#223">f</text><text x="10" y="11.4" text-anchor="middle" font-family="Liberation Sans" font-size="6.5" fill="#2a7a3a">x</text><path d="M11.5 15.5l2-3l2 3z" fill="#e8a33a" stroke="#b87a1e" stroke-width="0.5"/></g>
<g transform="translate(754,93)"><defs><radialGradient id="gba_85" cx="0.4" cy="0.3" r="0.8"><stop offset="0" stop-color="#fff"/><stop offset="0.6" stop-color="#bcd2f2"/><stop offset="1" stop-color="#6a92d2"/></radialGradient></defs><circle cx="7.5" cy="7.5" r="6.8" fill="url(#gba_85)" stroke="#5a74a8" stroke-width="1"/><path d="M3.5 5.4h8M3 7.6h9M3.5 9.8h8" stroke="#d22848" stroke-width="1.3"/><path d="M11.5 15.5l2-3l2 3z" fill="#e8a33a" stroke="#b87a1e" stroke-width="0.5"/></g>
<g transform="translate(782,93)"><rect x="1" y="4" width="12" height="11" fill="#f0f5fc" stroke="#4f78b8"/><rect x="1" y="4" width="12" height="3" fill="#7ea0d8"/><path d="M1 10.5h12M5 7v8M9 7v8" stroke="#6a8fca" stroke-width="0.9"/><path d="M8 8.5l5.5-6.5l2 1.6l-5.5 6.5z" fill="#f4f4f4" stroke="#8a8f9a" stroke-width="0.8"/></g>
<g transform="translate(811,93)"><rect x="1" y="2" width="14" height="12" fill="#fff"/><path d="M1.5 1v14M0 2.5h16M0 13.5h16" stroke="#5a5f68" stroke-width="1" fill="none"/><path d="M8.5 3.5v10" stroke="#000" stroke-width="1" stroke-dasharray="1.5 1"/><g fill="none" stroke="#1a7c22" stroke-width="1.15"><path d="M1.5 8.5h14"/><rect x="2.5" y="7.5" width="2" height="2" fill="#1a7c22"/><rect x="7" y="7.5" width="2" height="2" fill="#1a7c22"/><rect x="12.500" y="7.5" width="2" height="2" fill="#1a7c22"/></g></g>
<g transform="translate(833,93)"><rect x="1" y="2" width="14" height="12" fill="#fff"/><path d="M1.5 1v14M0 2.5h16M0 13.5h16" stroke="#5a5f68" stroke-width="1" fill="none"/><path d="M8.5 3.5v10" stroke="#000" stroke-width="1" stroke-dasharray="1.5 1"/><g fill="none" stroke="#1a7c22" stroke-width="1.15"><path d="M1.5 7.5h14"/><rect x="2.500" y="6.500" width="2" height="2" fill="#1a7c22"/><rect x="12.500" y="6.500" width="2" height="2" fill="#1a7c22"/></g></g>
<g transform="translate(856,93)"><rect x="1" y="2" width="14" height="12" fill="#fff"/><path d="M1.5 1v14M0 2.5h16M0 13.5h16" stroke="#5a5f68" stroke-width="1" fill="none"/><path d="M8.5 3.5v10" stroke="#000" stroke-width="1" stroke-dasharray="1.5 1"/><g fill="none" stroke="#1a7c22" stroke-width="1.15"><path d="M2.5 13.5c1-6 3-10 5.5-10s4.5 4 6 10"/></g></g>
<g transform="translate(879,93)"><rect x="1" y="2" width="14" height="12" fill="#fff"/><path d="M1.5 1v14M0 2.5h16M0 13.5h16" stroke="#5a5f68" stroke-width="1" fill="none"/><path d="M8.5 3.5v10" stroke="#000" stroke-width="1" stroke-dasharray="1.5 1"/><g fill="none" stroke="#1a7c22" stroke-width="1.15"><path d="M2.5 3c1 6 3 10 5.5 10s4.5-4 6-10"/></g></g>
<g transform="translate(902,93)"><rect x="1" y="2" width="14" height="12" fill="#fff"/><path d="M1.5 1v14M0 2.5h16M0 13.5h16" stroke="#5a5f68" stroke-width="1" fill="none"/><path d="M11.5 3.5v10" stroke="#000" stroke-width="1" stroke-dasharray="1.5 1"/><g fill="none" stroke="#1a7c22" stroke-width="1.15"><path d="M1.5 10c1.5-2 2.5-2 3.5 1s2.5 2 3.500-2s2-6 3-6s2 2 3 6"/></g></g>
<g transform="translate(925,93)"><rect x="1" y="2" width="14" height="12" fill="#fff"/><path d="M1.5 1v14M0 2.5h16M0 13.5h16" stroke="#5a5f68" stroke-width="1" fill="none"/><path d="M11.5 3.5v10" stroke="#000" stroke-width="1" stroke-dasharray="1.5 1"/><g fill="none" stroke="#1a7c22" stroke-width="1.15"><path d="M1.5 6c1-3 3-3 4.500 0s2.500 7 4.500 7s2.500-5 3.500-9"/></g></g>
<g transform="translate(948,93)"><rect x="1" y="2" width="14" height="12" fill="#fff"/><path d="M1.5 1v14M0 2.5h16M0 13.5h16" stroke="#5a5f68" stroke-width="1" fill="none"/><path d="M7.5 3.5v10" stroke="#000" stroke-width="1" stroke-dasharray="1.5 1"/><g fill="none" stroke="#1a7c22" stroke-width="1.15"><path d="M1.5 13.5l10-10.5h3.500"/></g></g>
<g transform="translate(971,93)"><rect x="1" y="2" width="14" height="12" fill="#fff"/><path d="M1.5 1v14M0 2.5h16M0 13.5h16" stroke="#5a5f68" stroke-width="1" fill="none"/><path d="M5.5 3.5v10" stroke="#000" stroke-width="1" stroke-dasharray="1.5 1"/><g fill="none" stroke="#1a7c22" stroke-width="1.15"><path d="M1.5 9c3-6 6-6 8 0l2 4M1.500 13c3-2 5-9 8-7.500s3 1 5 1.500"/></g></g>
<g transform="translate(994,93)"><rect x="1" y="2" width="14" height="12" fill="#fff"/><path d="M1.5 1v14M0 2.5h16M0 13.5h16" stroke="#5a5f68" stroke-width="1" fill="none"/><path d="M5.5 3.5v10" stroke="#000" stroke-width="1" stroke-dasharray="1.5 1"/><g fill="none" stroke="#1a7c22" stroke-width="1.15"><path d="M1.500 3.500c3 7 6 9 8.500 6s3-3 5-3M1.500 13l9-10"/></g></g>
<g transform="translate(1017,93)"><rect x="1" y="2" width="14" height="12" fill="#fff"/><path d="M1.5 1v14M0 2.5h16M0 13.5h16" stroke="#5a5f68" stroke-width="1" fill="none"/><path d="M8.5 3.5v10" stroke="#000" stroke-width="1" stroke-dasharray="1.5 1"/><g fill="none" stroke="#1a7c22" stroke-width="1.15"><path d="M1.500 3l6.500 4l6.500-4M1.500 5.800l6.500 4l6.500-4M1.500 8.600l6.500 4l6.500-4"/><path d="M6 11.500h4l-2 2.500z" fill="#000" stroke="none"/></g></g>
<g transform="translate(1040,93)"><rect x="1" y="2" width="14" height="12" fill="#fff"/><path d="M1.5 1v14M0 2.5h16M0 13.5h16" stroke="#5a5f68" stroke-width="1" fill="none"/><path d="M8.5 3.5v10" stroke="#000" stroke-width="1" stroke-dasharray="1.5 1"/><g fill="none" stroke="#1a7c22" stroke-width="1.15"><path d="M1.500 8l6.500-4l6.500 4M1.500 10.800l6.500-4l6.500 4M1.500 13.600l6.500-4l6.500 4"/><path d="M6 4.500h4l-2-2.500z" fill="#000" stroke="none"/></g></g>
<g transform="translate(1068,93)"><rect x="1" y="2.500" width="9.500" height="10" rx="1" fill="#e3b84a" stroke="#a8801e"/><rect x="3.500" y="1" width="4.500" height="3" rx="0.800" fill="#f4dc8a" stroke="#9a7a2a" stroke-width="0.800"/><rect x="5.500" y="7.500" width="10" height="7.500" fill="#f4f7fd" stroke="#4f6aa8"/><rect x="5.500" y="7.500" width="10" height="1.800" fill="#7a98d0"/><path d="M7 12.500l1.200-1.500l1.200 1.500l1.200-1.500l1.200 1.500l1.200-1.500l1 1.200" fill="none" stroke="#d03030" stroke-width="0.900"/></g>
<g transform="translate(1088,93)"><path d="M3.5 6.5h9l-4.5 5z" fill="#000"/></g>
<g transform="translate(1115,93)"><rect x="2.5" y="1.5" width="11" height="13" fill="#f4f7fd" stroke="#4f6cae"/><rect x="3" y="2" width="10" height="2" fill="#4f78c8"/><path d="M4.5 6.5h7M4.5 8.5h7M4.5 10.5h7M4.5 12.5h7" stroke="#7f93c4" stroke-width="1"/></g>
<g transform="translate(1143,93)"><rect x="1.5" y="2.5" width="10" height="9" rx="1" fill="#e3b84a" stroke="#a8801e"/><rect x="4.5" y="0.5" width="4" height="3" rx="0.8" fill="#f4dc8a" stroke="#9a7a2a" stroke-width="0.8"/><rect x="3.5" y="7.5" width="12" height="7" fill="#f2f5fc" stroke="#2c3c64" stroke-width="1"/><text x="9.5" y="13.4" text-anchor="middle" font-family="Liberation Serif" font-weight="bold" font-size="7" fill="#1a2a4a">123</text></g>
<g transform="translate(1173,93)"><rect x="4" y="4.500" width="8" height="7" fill="#eef0f6" stroke="#8a90a0" stroke-width="0.800"/><path d="M5 10.500l2.500-2.500l1.500 1l2.500-3" fill="none" stroke="#d85060" stroke-width="1"/><path d="M0.500 2.500h15M0.500 13.500h15" stroke="#000" stroke-width="1.300"/><path d="M0.500 6h3M0.500 10h3M12.500 6h3M12.500 10h3" stroke="#000" stroke-width="1"/><path d="M2.500 1l-2 1.500l2 1.500M13.500 1l2 1.500l-2 1.500M2.500 12l-2 1.500l2 1.500M13.500 12l2 1.500l-2 1.500" fill="#000" stroke="none"/></g>
<g transform="translate(1194,93)"><rect x="4.500" y="4" width="7" height="8" fill="#eef0f6" stroke="#8a90a0" stroke-width="0.800"/><path d="M5.500 10.500l2-2.500l1.500 1l2-3" fill="none" stroke="#d85060" stroke-width="1"/><path d="M2.500 0.500v15M13.500 0.500v15" stroke="#000" stroke-width="1.300"/><path d="M6 0.500v3M10 0.500v3M6 12.500v3M10 12.500v3" stroke="#000" stroke-width="1"/><path d="M1 2.500l1.500-2l1.500 2M1 13.500l1.500 2l1.500-2M12 2.500l1.500-2l1.500 2M12 13.500l1.500 2l1.500-2" fill="#000" stroke="none"/></g>
<g transform="translate(1221,93)"><path d="M10 10l4.200 4.200" stroke="#c9973c" stroke-width="2.800" stroke-linecap="round"/><circle cx="6.500" cy="6.500" r="5" fill="#e4eefb" stroke="#7a8aa4" stroke-width="1.300"/><path d="M3.800 6.500h5.400M6.500 3.800v5.400" stroke="#2c5cc0" stroke-width="1.800"/></g>
<g transform="translate(1244,93)"><path d="M10 10l4.200 4.200" stroke="#c9973c" stroke-width="2.800" stroke-linecap="round"/><circle cx="6.500" cy="6.500" r="5" fill="#e4eefb" stroke="#7a8aa4" stroke-width="1.300"/><path d="M3.800 6.500h5.400" stroke="#2c5cc0" stroke-width="1.800"/></g>
<g transform="translate(1268,93)"><path d="M7.500 11l3 3.500" stroke="#c9973c" stroke-width="2.600" stroke-linecap="round"/><circle cx="4.800" cy="8.800" r="3.600" fill="#eef2f8" stroke="#9aa2b0" stroke-width="1.100"/><rect x="5" y="0.800" width="10.500" height="6.400" fill="#f3f6fc" stroke="#3a4a78"/><text x="10.300" y="6" text-anchor="middle" font-family="Liberation Sans" font-weight="bold" font-size="5.600" fill="#1a2550" letter-spacing="-0.2">100</text></g>
<g transform="translate(1296,93)"><rect x="1" y="2" width="3.800" height="4.300" fill="#a9a9a9"/><rect x="6" y="2" width="3.800" height="4.300" fill="#bdbdbd"/><rect x="11" y="2" width="3.800" height="4.300" fill="#b0b0b0"/><rect x="1" y="8" width="3.800" height="4.300" fill="#a0a0a0"/><rect x="6" y="8" width="3.800" height="4.300" fill="#a9a9a9"/><rect x="11" y="8" width="3.800" height="4.300" fill="#dadada"/></g>
<g transform="translate(1316,93)"><path d="M3.5 6.5h9l-4.5 5z" fill="#9b9b9b"/></g>
<g transform="translate(1338,93)"><text x="8" y="14" text-anchor="middle" font-family="Liberation Serif" font-weight="bold" font-size="17" fill="#2a4a98">A</text></g>
<g transform="translate(1361,93)"><text x="6.500" y="11.500" text-anchor="middle" font-family="Liberation Sans" font-size="14" fill="#2a56b0">A</text><rect x="11" y="0.800" width="3.200" height="3.200" fill="#fff" stroke="#6a7a9a" stroke-width="0.800"/><path d="M5 15l1.200-2.800l7-7l1.800 1.800l-7 7z" fill="#f0d84a" stroke="#b8a030" stroke-width="0.600"/><path d="M5 15l1.200-2.800l1.600 1.600z" fill="#3a6ac0"/></g>
<g transform="translate(1381,93)"><path d="M3.5 6.5h9l-4.5 5z" fill="#000"/></g>
<g transform="translate(1408,93)"><path d="M1.500 14.500v-8h4l1.500-1.500h7.500v9.500z" fill="#c4c4c4" stroke="#b0b0b0"/><path d="M3 3.500h4v-2l3 3l-3 3v-2h-4z" fill="#d8d8d8" stroke="#b8b8b8" stroke-width="0.700"/></g>
<g transform="translate(1436,93)"><rect x="1.500" y="1.500" width="7" height="7" fill="#e2e2e2" stroke="#bcbcbc"/><rect x="8" y="8" width="6.500" height="6.500" fill="#e2e2e2" stroke="#bcbcbc"/><rect x="4.500" y="4.500" width="7" height="7" fill="#cfcfcf" stroke="#a9a9a9"/></g>
<g transform="translate(1458,93)"><rect x="4.500" y="4.500" width="7" height="7" fill="#cfcfcf" stroke="#a9a9a9"/><rect x="1.500" y="1.500" width="6" height="6" fill="#e2e2e2" stroke="#bcbcbc"/><rect x="9" y="9" width="6" height="6" fill="#e2e2e2" stroke="#bcbcbc"/></g>
<g transform="translate(1487,93)"><path d="M2 1.500v13" stroke="#5a5a5a" stroke-width="1.800"/><rect x="4.500" y="3" width="7" height="2.600" fill="#f4f4f4" stroke="#9a9a9a" stroke-width="0.800"/><rect x="4.500" y="7.500" width="9" height="2.600" fill="#f4f4f4" stroke="#9a9a9a" stroke-width="0.800"/><path d="M12 13h-7M7 11.500l-2.200 1.500l2.200 1.500" fill="none" stroke="#5a5a5a" stroke-width="0.900"/></g>
<g transform="translate(1510,93)"><path d="M8 0.500v2M8 13.500v2" stroke="#5a5a5a" stroke-width="2"/><rect x="3" y="4" width="10" height="2.600" fill="#f4f4f4" stroke="#9a9a9a" stroke-width="0.800"/><rect x="4.500" y="9" width="7" height="2.600" fill="#f4f4f4" stroke="#9a9a9a" stroke-width="0.800"/><path d="M8 6.600v2.400M8 11.600v1.500" stroke="#9a9a9a" stroke-width="1"/></g>
<g transform="translate(1533,93)"><path d="M14 1.500v13" stroke="#5a5a5a" stroke-width="1.800"/><rect x="4.500" y="3" width="7" height="2.600" fill="#f4f4f4" stroke="#9a9a9a" stroke-width="0.800"/><rect x="2.500" y="7.500" width="9" height="2.600" fill="#f4f4f4" stroke="#9a9a9a" stroke-width="0.800"/><path d="M4 13h7M9 11.500l2.200 1.500l-2.200 1.500" fill="none" stroke="#5a5a5a" stroke-width="0.900"/></g>
<g transform="translate(1556,93)"><path d="M1.500 3h13" stroke="#5a5a5a" stroke-width="1.800"/><rect x="3.500" y="5" width="2.600" height="6" fill="#f4f4f4" stroke="#9a9a9a" stroke-width="0.800"/><rect x="7.500" y="5" width="2.600" height="9" fill="#f4f4f4" stroke="#9a9a9a" stroke-width="0.800"/><path d="M13 13v-7M11.500 8l1.500-2.200l1.500 2.200" fill="none" stroke="#5a5a5a" stroke-width="0.900"/></g>
<g transform="translate(1579,93)"><path d="M0.500 8h2M13.500 8h2" stroke="#5a5a5a" stroke-width="2"/><rect x="4" y="2.500" width="2.600" height="11" fill="#f4f4f4" stroke="#9a9a9a" stroke-width="0.800"/><rect x="9.500" y="4.500" width="2.600" height="7" fill="#f4f4f4" stroke="#9a9a9a" stroke-width="0.800"/><path d="M6.600 8h2.900" stroke="#9a9a9a" stroke-width="1"/><path d="M8 6v4" stroke="#5a5a5a" stroke-width="1.200"/></g>
<g transform="translate(1602,93)"><path d="M1.500 14h13" stroke="#5a5a5a" stroke-width="1.800"/><rect x="3" y="5.500" width="2.600" height="6.500" fill="#f4f4f4" stroke="#9a9a9a" stroke-width="0.800"/><rect x="7" y="3.500" width="2.600" height="8.500" fill="#f4f4f4" stroke="#9a9a9a" stroke-width="0.800"/><path d="M13 4v7M11.500 9l1.500 2.200l1.500-2.200" fill="none" stroke="#5a5a5a" stroke-width="0.900"/></g>
</svg>
<div id="title">Micro-Cap 12.2.0.3 (64 bit) - [Stability Analysis]</div>
<div class="mi" style="left:34px">File</div>
<div class="mi" style="left:71.5px">Edit</div>
<div class="mi" style="left:111px">Component</div>
<div class="mi" style="left:203px">Windows</div>
<div class="mi" style="left:278px">Options</div>
<div class="mi" style="left:344px">Stability</div>
<div class="mi" style="left:412px">Scope</div>
<div class="mi" style="left:467px">Monte Carlo</div>
<div class="mi" style="left:563px">Help</div>
<div class="yl" style="top:135px">80.00</div>
<div class="yl" style="top:205px">75.00</div>
<div class="yl" style="top:275px">70.00</div>
<div class="yl" style="top:345px">65.00</div>
<div class="yl" style="top:415px">60.00</div>
<div class="yl" style="top:485px">55.00</div>
<div class="yl" style="top:555px">50.00</div>
<div class="yl" style="top:625px">45.00</div>
<div class="yl" style="top:695px">40.00</div>
<div class="yl" style="top:765px">35.00</div>
<div class="yl" style="top:835px">30.00</div>
<div class="xl" style="left:61px;text-align:left;width:60px">10m</div>
<div class="xl" style="left:321px;width:80px;text-align:center">100m</div>
<div class="xl" style="left:622px;width:80px;text-align:center">1</div>
<div class="xl" style="left:923px;width:80px;text-align:center">10</div>
<div class="xl" style="left:1223px;width:80px;text-align:center">100</div>
<div class="xl" style="left:1524px;width:80px;text-align:center">1K</div>
<div class="xl" style="left:1825px;width:80px;text-align:center">10K</div>
<div id="ctitle">ФК_Су-XXI_v14_OPAasHPF.CIR OPEN C18=100n...1u</div>
<div id="ylab">dB(LoopGain)</div><div id="xlab">F (Hz)</div>
<div id="tip">100.897m,76.429 C18=100n</div>
<div class="red" id="r1" style="top:261px;letter-spacing:0.69px">зависимость петлевого усиления фонокорректора</div>
<div class="red" id="r2" style="top:303px;letter-spacing:0.48px">Су-XXI_v.<span class="os">1</span><span class="os4">4</span> от ёмкости конденсатора САРы по постоянке</div>
<div class="red" id="r3" style="top:389px;letter-spacing:0.16px">сверху С=<span class="os">1</span><span class="os">0</span><span class="os">0</span> нФ, снизу С=<span class="os">1</span> мкФ</div>
<div class="tab" id="t1" style="left:124.8px;font-weight:bold;font-size:13.3px;letter-spacing:0.9px">OPEN</div>
<div class="tab" id="t2" style="left:181px">NYQUIST</div>
<div class="dtab" id="d1" style="left:10.3px;top:959.5px">ФК_Су-XXI_v14_OPAasHPF.CIR</div>
<div class="dtab" id="d2" style="left:217.5px;top:961.3px">Stability Analysis</div>
<div id="msgtxt">One or the other is missing.</div>
<div class="st" id="s1" style="left:2.5px">Scale Mode</div>
<div class="st" id="s2" style="left:265px">Double-click in the window for more options.</div>
<div class="st" id="s3" style="left:1444px;word-spacing:1.8px">100.897m , 76.429 C18=100n</div>
</body></html>
